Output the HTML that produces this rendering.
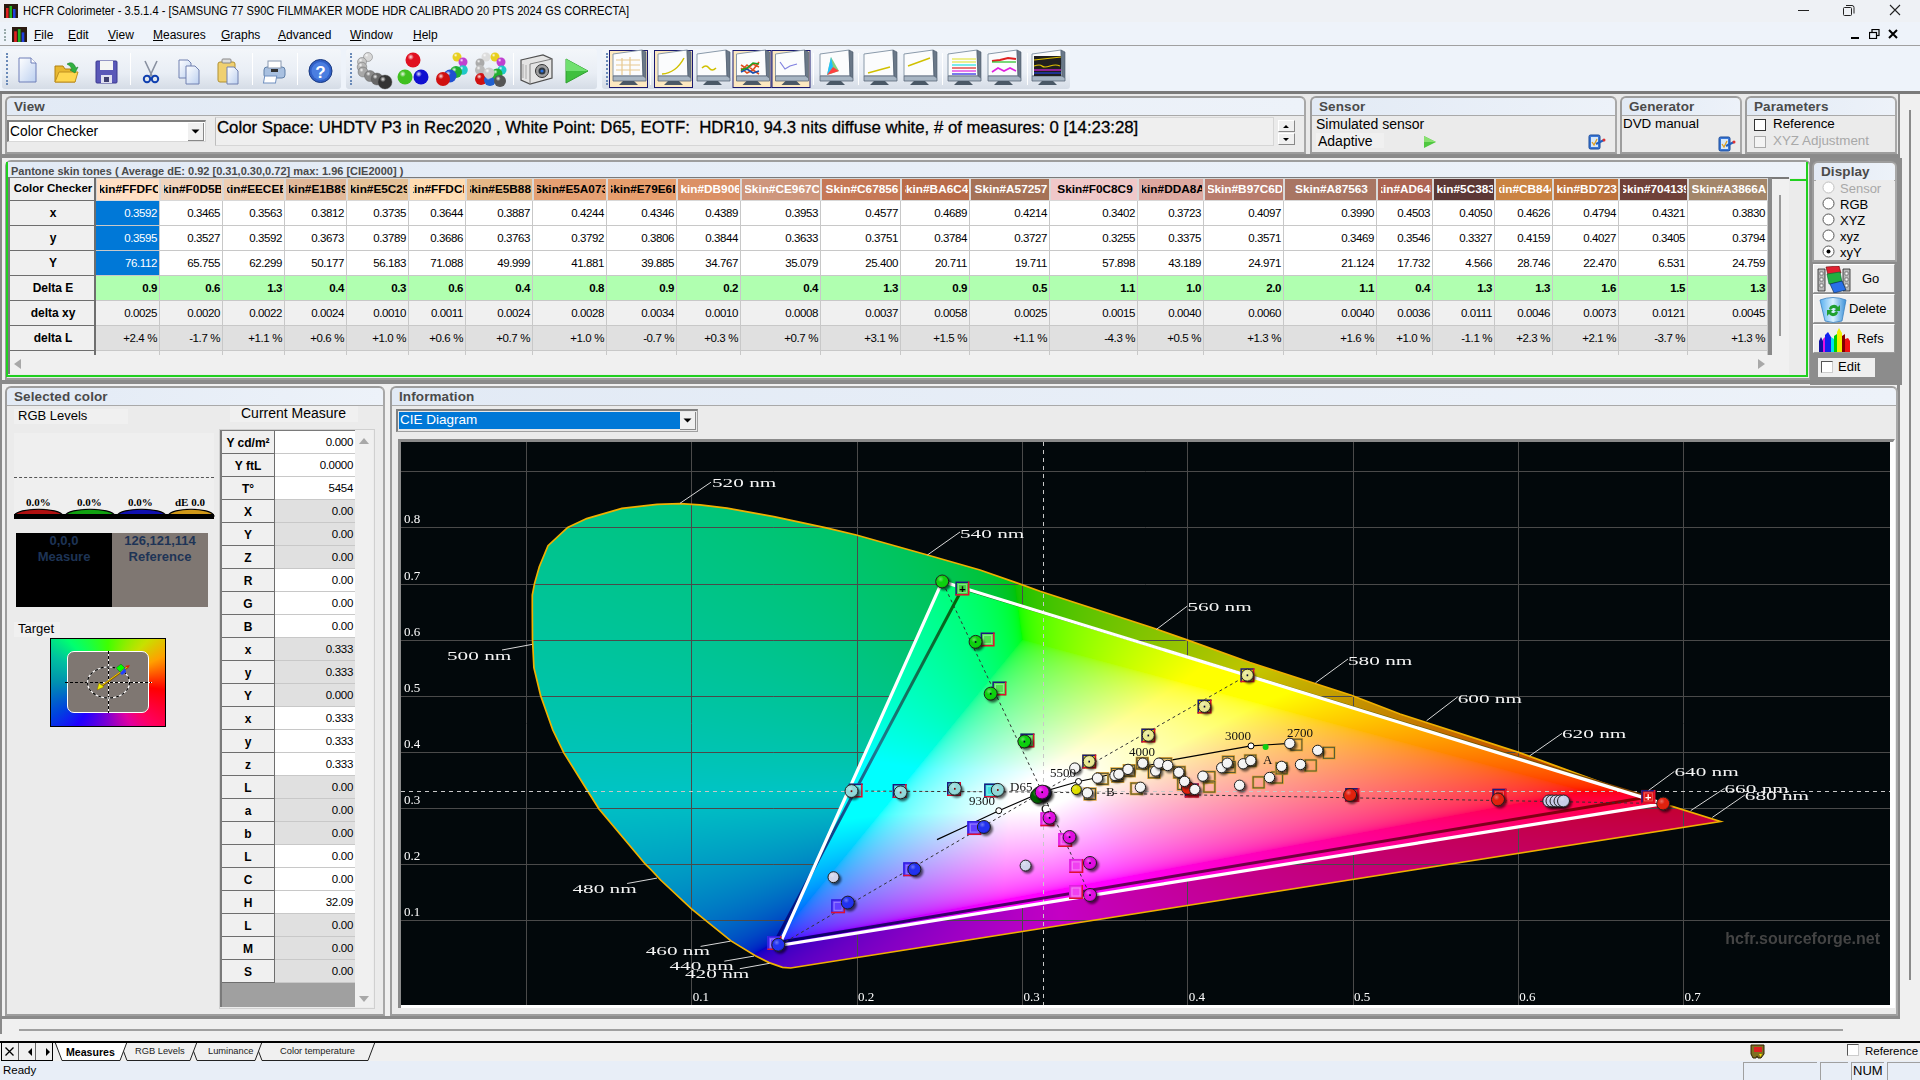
<!DOCTYPE html>
<html><head><meta charset="utf-8"><title>HCFR</title>
<style>
*{box-sizing:border-box;margin:0;padding:0}
html,body{width:1920px;height:1080px;overflow:hidden;background:#f0f0f0;font-family:"Liberation Sans",sans-serif;font-size:12px;color:#000}
.a{position:absolute}
.hdr{position:absolute;background:#e6edf6;border-bottom:1px solid #a0a0a0;font-weight:bold;color:#444;font-size:12px;padding-left:6px;line-height:17px}
.pnl{position:absolute;border:2px solid #9a9a9a;background:#ebebeb}
.t{position:absolute;white-space:nowrap}
</style></head><body>

<div class="a" style="left:0;top:0;width:1920px;height:22px;background:#eef1f5"></div>
<svg class="a" style="left:4px;top:4px" width="14" height="14" viewBox="0 0 14 14"><rect width="14" height="14" fill="#2a1a10"/><rect x="2" y="4" width="2.5" height="10" fill="#e02020"/><rect x="5.5" y="2" width="2.5" height="12" fill="#20b020"/><rect x="9" y="5" width="2.5" height="9" fill="#2040e0"/></svg>
<div class="t" style="left:23px;top:4px;font-size:12px;color:#000;transform:scaleX(0.9286);transform-origin:0 0">HCFR Colorimeter - 3.5.1.4 - [SAMSUNG 77 S90C FILMMAKER MODE HDR CALIBRADO 20 PTS 2024 GS CORRECTA]</div>
<div class="a" style="left:1798px;top:10px;width:11px;height:1px;background:#222"></div>
<svg class="a" style="left:1843px;top:4px" width="12" height="12"><rect x="0.5" y="3.5" width="8" height="8" rx="1" fill="none" stroke="#222"/><path d="M3 1.5 h6 a2 2 0 0 1 2 2 v6" fill="none" stroke="#222"/></svg>
<svg class="a" style="left:1889px;top:4px" width="12" height="12"><path d="M1 1 L11 11 M11 1 L1 11" stroke="#222" stroke-width="1.1"/></svg>
<div class="a" style="left:0;top:22px;width:1920px;height:23px;background:#eef3fa"></div>
<div class="a" style="left:0;top:45px;width:1920px;height:1px;background:#a0a0a0"></div>
<div class="a" style="left:4px;top:29px;width:2px;height:12px;border-left:2px dotted #9aa"></div>
<svg class="a" style="left:12px;top:27px" width="15" height="15" viewBox="0 0 14 14"><rect width="14" height="14" fill="#2a1a10"/><rect x="2" y="4" width="2.5" height="10" fill="#e02020"/><rect x="5.5" y="2" width="2.5" height="12" fill="#20b020"/><rect x="9" y="5" width="2.5" height="9" fill="#2040e0"/></svg>
<div class="t" style="left:34px;top:28px;font-size:12px"><u>F</u>ile</div>
<div class="t" style="left:68px;top:28px;font-size:12px"><u>E</u>dit</div>
<div class="t" style="left:108px;top:28px;font-size:12px"><u>V</u>iew</div>
<div class="t" style="left:153px;top:28px;font-size:12px"><u>M</u>easures</div>
<div class="t" style="left:221px;top:28px;font-size:12px"><u>G</u>raphs</div>
<div class="t" style="left:278px;top:28px;font-size:12px"><u>A</u>dvanced</div>
<div class="t" style="left:350px;top:28px;font-size:12px"><u>W</u>indow</div>
<div class="t" style="left:413px;top:28px;font-size:12px"><u>H</u>elp</div>
<div class="a" style="left:1851px;top:37px;width:8px;height:2px;background:#000"></div>
<svg class="a" style="left:1869px;top:29px" width="11" height="10"><rect x="3" y="0.5" width="7" height="6" fill="none" stroke="#000" stroke-width="1.2"/><rect x="0.5" y="3.5" width="7" height="6" fill="#eef3fa" stroke="#000" stroke-width="1.2"/></svg>
<svg class="a" style="left:1888px;top:29px" width="10" height="10"><path d="M1 1 L9 9 M9 1 L1 9" stroke="#000" stroke-width="2"/></svg>
<div class="a" style="left:0;top:46px;width:1920px;height:45px;background:#eef3fa"></div>
<div class="a" style="left:2px;top:49px;width:339px;height:40px;border-radius:3px;background:linear-gradient(#f3f6fa,#e9eef5 60%,#d5dce6)"></div>
<div class="a" style="left:6px;top:53px;width:2px;height:32px;border-left:2px dotted #6a8ab8"></div>
<div class="a" style="left:346px;top:49px;width:251px;height:40px;border-radius:3px;background:linear-gradient(#f3f6fa,#e9eef5 60%,#d5dce6)"></div>
<div class="a" style="left:350px;top:53px;width:2px;height:32px;border-left:2px dotted #6a8ab8"></div>
<div class="a" style="left:602px;top:49px;width:468px;height:40px;border-radius:3px;background:linear-gradient(#f3f6fa,#e9eef5 60%,#d5dce6)"></div>
<div class="a" style="left:606px;top:53px;width:2px;height:32px;border-left:2px dotted #6a8ab8"></div>
<div class="a" style="left:130px;top:53px;width:1px;height:32px;background:#c8ced8;border-right:1px solid #fff"></div>
<div class="a" style="left:252px;top:53px;width:1px;height:32px;background:#c8ced8;border-right:1px solid #fff"></div>
<div class="a" style="left:297px;top:53px;width:1px;height:32px;background:#c8ced8;border-right:1px solid #fff"></div>
<div class="a" style="left:513px;top:53px;width:1px;height:32px;background:#c8ced8;border-right:1px solid #fff"></div>
<div class="a" style="left:650px;top:53px;width:1px;height:32px;background:#c8ced8;border-right:1px solid #fff"></div>
<div class="a" style="left:813px;top:53px;width:1px;height:32px;background:#c8ced8;border-right:1px solid #fff"></div>
<div class="a" style="left:858px;top:53px;width:1px;height:32px;background:#c8ced8;border-right:1px solid #fff"></div>
<div class="a" style="left:942px;top:53px;width:1px;height:32px;background:#c8ced8;border-right:1px solid #fff"></div>
<div class="a" style="left:1027px;top:53px;width:1px;height:32px;background:#c8ced8;border-right:1px solid #fff"></div>
<div class="a" style="left:0;top:91px;width:1920px;height:3px;background:#7a7a7a"></div>
<svg class="a" style="left:0;top:46px" width="1100" height="46"><defs><linearGradient id="pg" x1="0" y1="0" x2="1" y2="1"><stop offset="0" stop-color="#fff"/><stop offset="1" stop-color="#bcd0f0"/></linearGradient><radialGradient id="ball" cx="0.35" cy="0.3" r="0.7"><stop offset="0" stop-color="#fff" stop-opacity="0.9"/><stop offset="0.3" stop-color="#fff" stop-opacity="0"/></radialGradient><linearGradient id="mon" x1="0" y1="0" x2="0" y2="1"><stop offset="0" stop-color="#dfe6ee"/><stop offset="1" stop-color="#6f8296"/></linearGradient></defs>
<path d="M19 12 h12 l5 5 v19 h-17 z" fill="url(#pg)" stroke="#6f7fb8" stroke-width="1"/><path d="M31 12 v5 h5" fill="#fff" stroke="#6f7fb8"/>
<path d="M55 20 h8 l2 3 h10 v13 h-20 z" fill="#e8b830" stroke="#b08010"/><path d="M55 36 l4 -10 h19 l-3 10 z" fill="#ffd850" stroke="#c09020"/><path d="M67 18 q6 -4 9 4 l2 -1 -3 6 -5 -3 2 -1 q-2 -4 -5 -5z" fill="#30b040" stroke="#208030" stroke-width="0.6"/>
<rect x="96" y="15" width="21" height="22" rx="1" fill="#5a58b8" stroke="#3a3890"/><rect x="100" y="15" width="13" height="9" fill="#f4f4f4"/><rect x="101" y="29" width="11" height="8" fill="#e0e0f0"/><rect x="104" y="31" width="5" height="5" fill="#404070"/>
<path d="M145 15 L153 32 M157 15 L149 32" stroke="#8890a0" stroke-width="1.6"/><circle cx="147" cy="33" r="3.2" fill="none" stroke="#1040b0" stroke-width="2"/><circle cx="155" cy="33" r="3.2" fill="none" stroke="#1040b0" stroke-width="2"/>
<path d="M179 14 h9 l3 3 v15 h-12 z" fill="url(#pg)" stroke="#7080b0"/><path d="M186 20 h9 l4 4 v14 h-13 z" fill="url(#pg)" stroke="#7080b0"/>
<rect x="218" y="16" width="17" height="20" rx="2" fill="#f0d070" stroke="#b09030"/><rect x="222" y="13" width="9" height="4" rx="1" fill="#ddd" stroke="#888"/><path d="M227 21 h7 l4 4 v13 h-11 z" fill="url(#pg)" stroke="#7080b0"/>
<rect x="264" y="21" width="21" height="11" rx="3" fill="#a8c0e0" stroke="#6080a8"/><rect x="268" y="15" width="13" height="7" fill="#fff" stroke="#8898b0"/><rect x="270" y="30" width="12" height="7" fill="#fff" stroke="#7090c0" transform="skewX(-10)"/><rect x="271" y="23" width="7" height="3" fill="#333"/>
<circle cx="320.5" cy="25" r="11.5" fill="#3060c8" stroke="#1a3a80"/><circle cx="320.5" cy="25" r="9" fill="#4a7ee0"/><text x="320.5" y="31.5" font-size="17" font-weight="bold" fill="#fff" text-anchor="middle" font-family="Liberation Sans">?</text>
<circle cx="368" cy="11" r="4.5" fill="#d8d8d8" stroke="#555" stroke-width="0.4"/><circle cx="368" cy="11" r="4.5" fill="url(#ball)"/>
<circle cx="362" cy="16" r="4.5" fill="#c8c8c8" stroke="#555" stroke-width="0.4"/><circle cx="362" cy="16" r="4.5" fill="url(#ball)"/>
<circle cx="362" cy="21" r="4.8" fill="#b8b8b8" stroke="#555" stroke-width="0.4"/><circle cx="362" cy="21" r="4.8" fill="url(#ball)"/>
<circle cx="363" cy="26" r="5" fill="#a8a8a8" stroke="#555" stroke-width="0.4"/><circle cx="363" cy="26" r="5" fill="url(#ball)"/>
<circle cx="370" cy="30" r="5.5" fill="#888" stroke="#555" stroke-width="0.4"/><circle cx="370" cy="30" r="5.5" fill="url(#ball)"/>
<circle cx="377" cy="33" r="6" fill="#666" stroke="#555" stroke-width="0.4"/><circle cx="377" cy="33" r="6" fill="url(#ball)"/>
<circle cx="385" cy="36" r="7" fill="#333" stroke="#555" stroke-width="0.4"/><circle cx="385" cy="36" r="7" fill="url(#ball)"/>
<circle cx="413" cy="14" r="7.5" fill="#e01020"/><circle cx="413" cy="14" r="7.5" fill="url(#ball)"/>
<circle cx="405" cy="31" r="7.5" fill="#40c020"/><circle cx="405" cy="31" r="7.5" fill="url(#ball)"/>
<circle cx="421" cy="31" r="7.5" fill="#1010d0"/><circle cx="421" cy="31" r="7.5" fill="url(#ball)"/>
<circle cx="457" cy="11" r="4.5" fill="#e8d020"/><circle cx="457" cy="11" r="4.5" fill="url(#ball)"/>
<circle cx="463" cy="16" r="4.5" fill="#c040d0"/><circle cx="463" cy="16" r="4.5" fill="url(#ball)"/>
<circle cx="463" cy="24" r="4.8" fill="#20c8c8"/><circle cx="463" cy="24" r="4.8" fill="url(#ball)"/>
<circle cx="456" cy="26" r="6" fill="#20b030"/><circle cx="456" cy="26" r="6" fill="url(#ball)"/>
<circle cx="450" cy="30" r="6.5" fill="#2050d0"/><circle cx="450" cy="30" r="6.5" fill="url(#ball)"/>
<circle cx="443" cy="33" r="7" fill="#d01010"/><circle cx="443" cy="33" r="7" fill="url(#ball)"/>
<circle cx="486" cy="11" r="4.5" fill="#ddd"/><circle cx="486" cy="11" r="4.5" fill="url(#ball)"/>
<circle cx="495" cy="11" r="4.5" fill="#e8d020"/><circle cx="495" cy="11" r="4.5" fill="url(#ball)"/>
<circle cx="501" cy="16" r="4.5" fill="#c040d0"/><circle cx="501" cy="16" r="4.5" fill="url(#ball)"/>
<circle cx="502" cy="24" r="4.5" fill="#20c8c8"/><circle cx="502" cy="24" r="4.5" fill="url(#ball)"/>
<circle cx="480" cy="17" r="4.5" fill="#aaa"/><circle cx="480" cy="17" r="4.5" fill="url(#ball)"/>
<circle cx="480" cy="24" r="5" fill="#bbb"/><circle cx="480" cy="24" r="5" fill="url(#ball)"/>
<circle cx="481" cy="33" r="6" fill="#d01010"/><circle cx="481" cy="33" r="6" fill="url(#ball)"/>
<circle cx="490" cy="34" r="6" fill="#2060d0"/><circle cx="490" cy="34" r="6" fill="url(#ball)"/>
<circle cx="497" cy="28" r="5.5" fill="#20b030"/><circle cx="497" cy="28" r="5.5" fill="url(#ball)"/>
<circle cx="500" cy="35" r="6" fill="#555"/><circle cx="500" cy="35" r="6" fill="url(#ball)"/>
<circle cx="489" cy="27" r="5.5" fill="#ccc"/><circle cx="489" cy="27" r="5.5" fill="url(#ball)"/>
<path d="M521 14 l22 -5 l9 4 v19 l-22 6 l-9 -4 z" fill="#e4e4e4" stroke="#505050" stroke-width="1.2"/><path d="M530 18 l22 -5 M530 18 v20" stroke="#808080" fill="none"/><path d="M523 18 v14 M526 19 v14" stroke="#aaa"/><circle cx="542" cy="25" r="6.5" fill="#a0a0a0" stroke="#333"/><circle cx="542" cy="25" r="3.5" fill="#303840"/><circle cx="542" cy="25" r="1.6" fill="#2a70e0"/>
<path d="M566 13 L588 25 L566 37 z" fill="#40c040" stroke="#30a030"/><path d="M566 13 L588 25 L566 25z" fill="#70e070"/>
<rect x="609.5" y="4.5" width="38" height="37" fill="#fce8c0" stroke="#1a1a70"/><path d="M613 8 L642 4 L643 30 L613 30 z" fill="#fbfcfd" stroke="#8a9aaa" stroke-width="1"/><path d="M642 4 l4 2 v26 l-3 -2z" fill="#6a7888" stroke="#4a5868" stroke-width="0.6"/><path d="M613 30 h30 l3 2 v3 h-33z" fill="#a8b6c4" stroke="#5a6878" stroke-width="0.8"/><path d="M623 35 h11 l4 4 h-19z" fill="#4a5866"/><path d="M616 14 h24 M616 19 h24 M616 24 h24 M622 12 v17 M630 11 v18" stroke="#e8c890" stroke-width="1.2"/>
<rect x="654.5" y="4.5" width="38" height="37" fill="#fce8c0" stroke="#1a1a70"/><path d="M658 8 L687 4 L688 30 L658 30 z" fill="#fbfcfd" stroke="#8a9aaa" stroke-width="1"/><path d="M687 4 l4 2 v26 l-3 -2z" fill="#6a7888" stroke="#4a5868" stroke-width="0.6"/><path d="M658 30 h30 l3 2 v3 h-33z" fill="#a8b6c4" stroke="#5a6878" stroke-width="0.8"/><path d="M668 35 h11 l4 4 h-19z" fill="#4a5866"/><path d="M662 28 Q676 27 684 12" fill="none" stroke="#d0c000" stroke-width="1.5"/>
<path d="M697 8 L726 4 L727 30 L697 30 z" fill="#fbfcfd" stroke="#8a9aaa" stroke-width="1"/><path d="M726 4 l4 2 v26 l-3 -2z" fill="#6a7888" stroke="#4a5868" stroke-width="0.6"/><path d="M697 30 h30 l3 2 v3 h-33z" fill="#a8b6c4" stroke="#5a6878" stroke-width="0.8"/><path d="M707 35 h11 l4 4 h-19z" fill="#4a5866"/><path d="M702 22 q4 -4 7 0 t7 0" fill="none" stroke="#d0c000" stroke-width="1.5"/>
<rect x="733.0" y="4.5" width="38" height="37" fill="#fce8c0" stroke="#1a1a70"/><path d="M736.5 8 L765.5 4 L766.5 30 L736.5 30 z" fill="#fbfcfd" stroke="#8a9aaa" stroke-width="1"/><path d="M765.5 4 l4 2 v26 l-3 -2z" fill="#6a7888" stroke="#4a5868" stroke-width="0.6"/><path d="M736.5 30 h30 l3 2 v3 h-33z" fill="#a8b6c4" stroke="#5a6878" stroke-width="0.8"/><path d="M746.5 35 h11 l4 4 h-19z" fill="#4a5866"/><path d="M741 25 l6 -6 6 5 6 -8 M741 19 l6 4 6 -5 6 3 M741 22 l6 5 6 -3 6 4" fill="none" stroke-width="1.6" stroke="#e05020"/><path d="M741 26 l6 -3 6 4 6 -2" fill="none" stroke="#1a50b0" stroke-width="1.6"/><path d="M741 24 l6 -2 6 -5 6 1" fill="none" stroke="#20a020" stroke-width="1.6"/>
<rect x="772.0" y="4.5" width="38" height="37" fill="#fce8c0" stroke="#1a1a70"/><path d="M775.5 8 L804.5 4 L805.5 30 L775.5 30 z" fill="#fbfcfd" stroke="#8a9aaa" stroke-width="1"/><path d="M804.5 4 l4 2 v26 l-3 -2z" fill="#6a7888" stroke="#4a5868" stroke-width="0.6"/><path d="M775.5 30 h30 l3 2 v3 h-33z" fill="#a8b6c4" stroke="#5a6878" stroke-width="0.8"/><path d="M785.5 35 h11 l4 4 h-19z" fill="#4a5866"/><path d="M780 16 l5 7 5 -3 7 -2" fill="none" stroke="#8080e0" stroke-width="1.2"/>
<path d="M820 8 L849 4 L850 30 L820 30 z" fill="#fbfcfd" stroke="#8a9aaa" stroke-width="1"/><path d="M849 4 l4 2 v26 l-3 -2z" fill="#6a7888" stroke="#4a5868" stroke-width="0.6"/><path d="M820 30 h30 l3 2 v3 h-33z" fill="#a8b6c4" stroke="#5a6878" stroke-width="0.8"/><path d="M830 35 h11 l4 4 h-19z" fill="#4a5866"/><path d="M831 11 l-4 18 l12 -4 z" fill="#80d080"/><path d="M831 11 l-4 18 l6 -8z" fill="#20c0ff"/><path d="M833 21 l6 4 -12 4z" fill="#ff4040"/>
<path d="M864 8 L893 4 L894 30 L864 30 z" fill="#fbfcfd" stroke="#8a9aaa" stroke-width="1"/><path d="M893 4 l4 2 v26 l-3 -2z" fill="#6a7888" stroke="#4a5868" stroke-width="0.6"/><path d="M864 30 h30 l3 2 v3 h-33z" fill="#a8b6c4" stroke="#5a6878" stroke-width="0.8"/><path d="M874 35 h11 l4 4 h-19z" fill="#4a5866"/><path d="M868 27 l22 -6" stroke="#d0c000" stroke-width="1.5"/>
<path d="M904 8 L933 4 L934 30 L904 30 z" fill="#fbfcfd" stroke="#8a9aaa" stroke-width="1"/><path d="M933 4 l4 2 v26 l-3 -2z" fill="#6a7888" stroke="#4a5868" stroke-width="0.6"/><path d="M904 30 h30 l3 2 v3 h-33z" fill="#a8b6c4" stroke="#5a6878" stroke-width="0.8"/><path d="M914 35 h11 l4 4 h-19z" fill="#4a5866"/><path d="M908 20 l22 -8" stroke="#d0c000" stroke-width="1.5"/>
<path d="M948 8 L977 4 L978 30 L948 30 z" fill="#fbfcfd" stroke="#8a9aaa" stroke-width="1"/><path d="M977 4 l4 2 v26 l-3 -2z" fill="#6a7888" stroke="#4a5868" stroke-width="0.6"/><path d="M948 30 h30 l3 2 v3 h-33z" fill="#a8b6c4" stroke="#5a6878" stroke-width="0.8"/><path d="M958 35 h11 l4 4 h-19z" fill="#4a5866"/><path d="M952 13 h24 M952 16 h24" stroke="#e0e020" stroke-width="1.2"/><path d="M952 19 h24" stroke="#20e0e0" stroke-width="1.2"/><path d="M952 22 h24" stroke="#e02020" stroke-width="1.2"/><path d="M952 25 h24" stroke="#e020e0" stroke-width="1.2"/><path d="M952 28 h24" stroke="#2020e0" stroke-width="1.2"/>
<path d="M988 8 L1017 4 L1018 30 L988 30 z" fill="#fbfcfd" stroke="#8a9aaa" stroke-width="1"/><path d="M1017 4 l4 2 v26 l-3 -2z" fill="#6a7888" stroke="#4a5868" stroke-width="0.6"/><path d="M988 30 h30 l3 2 v3 h-33z" fill="#a8b6c4" stroke="#5a6878" stroke-width="0.8"/><path d="M998 35 h11 l4 4 h-19z" fill="#4a5866"/><path d="M992 15 l8 -1 l8 -2 l8 1" fill="none" stroke="#e02020" stroke-width="2"/><path d="M992 16 h24" stroke="#20c020" stroke-width="1.2"/><path d="M992 26 l6 -4 6 3 6 -3 6 3" fill="none" stroke="#e020e0" stroke-width="1.6"/>
<path d="M1032 8 L1061 4 L1062 30 L1032 30 z" fill="#fbfcfd" stroke="#8a9aaa" stroke-width="1"/><path d="M1061 4 l4 2 v26 l-3 -2z" fill="#6a7888" stroke="#4a5868" stroke-width="0.6"/><path d="M1032 30 h30 l3 2 v3 h-33z" fill="#a8b6c4" stroke="#5a6878" stroke-width="0.8"/><path d="M1042 35 h11 l4 4 h-19z" fill="#4a5866"/><rect x="1034" y="10" width="27" height="20" fill="#202020"/><path d="M1034 14 l27 -3 M1034 20 q6 -2 8 0 t8 0 t10 0" fill="none" stroke="#e0c000" stroke-width="1.2"/><path d="M1034 24 h27" stroke="#e020e0" stroke-width="1.2"/><path d="M1034 27 h27" stroke="#2040e0" stroke-width="1.2"/>
</svg>
<div class="a" style="left:0;top:94px;width:1920px;height:948px;background:#f0f0f0"></div>
<div class="a" style="left:0;top:94px;width:2px;height:940px;background:#8a8a8a"></div>
<div class="a" style="left:2px;top:94px;width:1898px;height:62px;background:#e9e9e9;border:2px solid #8c8c8c;border-left:none;border-top:none"></div>
<div class="a" style="left:5px;top:96px;width:1301px;height:58px;background:#ebebeb;border:2px solid #9d9d9d;border-top-left-radius:6px;border-top-right-radius:6px;border-right-color:#a8a8a8"></div><div class="a" style="left:7px;top:98px;width:1297px;height:18px;background:linear-gradient(90deg,#e2eaf5,#edf2f9);border-bottom:1px solid #a9a9a9;border-top-left-radius:5px;border-top-right-radius:5px"></div><div class="t" style="left:14px;top:99px;font-weight:bold;color:#4a4a4a;font-size:13.5px;letter-spacing:0.1px">View</div>
<div class="a" style="left:7px;top:120px;width:199px;height:22px;background:#fff;border-top:2px solid #808080;border-left:2px solid #808080;border-right:1px solid #d8d8d8;border-bottom:1px solid #d8d8d8"></div>
<div class="t" style="left:10px;top:124px;font-size:13.8px">Color Checker</div>
<div class="a" style="left:188px;top:123px;width:16px;height:18px;background:#f0f0f0;border-right:1px solid #888;border-bottom:1px solid #888"></div>
<svg class="a" style="left:191px;top:129px" width="10" height="6"><path d="M0.5 0.5 h8 l-4 4z" fill="#000"/></svg>
<div class="a" style="left:215px;top:117px;width:1059px;height:29px;background:#efefef;border:1px solid #d6d6d6;border-left-color:#bdbdbd"></div>
<div class="t" style="left:217px;top:118px;font-size:16.8px;-webkit-text-stroke:0.3px #000">Color Space: UHDTV P3 in Rec2020 , White Point: D65, EOTF:&nbsp; HDR10, 94.3 nits diffuse white, # of measures: 0 [14:23:28]</div>
<div class="a" style="left:1278px;top:120px;width:17px;height:12px;background:#f0f0f0;border-right:1px solid #888;border-bottom:1px solid #888;border-left:1px solid #fff;border-top:1px solid #fff"></div>
<div class="a" style="left:1278px;top:133px;width:17px;height:12px;background:#f0f0f0;border-right:1px solid #888;border-bottom:1px solid #888;border-left:1px solid #fff;border-top:1px solid #fff"></div>
<svg class="a" style="left:1282px;top:123px" width="9" height="22"><path d="M1 5 h6 l-3 -3z M1 15 h6 l-3 3z" fill="#000"/></svg>
<div class="a" style="left:1310px;top:96px;width:307px;height:58px;background:#ebebeb;border:2px solid #9d9d9d;border-top-left-radius:6px;border-top-right-radius:6px;border-right-color:#a8a8a8"></div><div class="a" style="left:1312px;top:98px;width:303px;height:18px;background:linear-gradient(90deg,#e2eaf5,#edf2f9);border-bottom:1px solid #a9a9a9;border-top-left-radius:5px;border-top-right-radius:5px"></div><div class="t" style="left:1319px;top:99px;font-weight:bold;color:#4a4a4a;font-size:13.5px;letter-spacing:0.1px">Sensor</div>
<div class="t" style="left:1316px;top:116px;font-size:14px">Simulated sensor</div>
<div class="a" style="left:1316px;top:133px;width:68px;height:15px;background:#f0f0f0"></div>
<div class="t" style="left:1318px;top:133px;font-size:14px">Adaptive</div>
<svg class="a" style="left:1423px;top:135px" width="14" height="14"><path d="M1 1 L13 7 L1 13z" fill="#50c840"/><path d="M1 1 L13 7 L1 7z" fill="#88e070"/></svg>
<svg class="a" style="left:1588px;top:132px" width="18" height="18"><rect x="1" y="3" width="11" height="14" rx="1.5" fill="#3a78d8" stroke="#1a4a98"/><rect x="3" y="5" width="7" height="10" fill="#d8e8f8"/><path d="M4 10 l2 3 l3 -6" fill="none" stroke="#e0a020" stroke-width="1.3"/><path d="M8 12 l8 -4" stroke="#2060c0" stroke-width="2"/><circle cx="16" cy="8" r="1.5" fill="#e03030"/></svg>
<div class="a" style="left:1620px;top:96px;width:122px;height:58px;background:#ebebeb;border:2px solid #9d9d9d;border-top-left-radius:6px;border-top-right-radius:6px;border-right-color:#a8a8a8"></div><div class="a" style="left:1622px;top:98px;width:118px;height:18px;background:linear-gradient(90deg,#e2eaf5,#edf2f9);border-bottom:1px solid #a9a9a9;border-top-left-radius:5px;border-top-right-radius:5px"></div><div class="t" style="left:1629px;top:99px;font-weight:bold;color:#4a4a4a;font-size:13.5px;letter-spacing:0.1px">Generator</div>
<div class="t" style="left:1623px;top:116px;font-size:13.4px">DVD manual</div>
<svg class="a" style="left:1718px;top:134px" width="18" height="18"><rect x="1" y="3" width="11" height="14" rx="1.5" fill="#3a78d8" stroke="#1a4a98"/><rect x="3" y="5" width="7" height="10" fill="#d8e8f8"/><path d="M4 10 l2 3 l3 -6" fill="none" stroke="#e0a020" stroke-width="1.3"/><path d="M8 12 l8 -4" stroke="#2060c0" stroke-width="2"/><circle cx="16" cy="8" r="1.5" fill="#e03030"/></svg>
<div class="a" style="left:1745px;top:96px;width:152px;height:58px;background:#ebebeb;border:2px solid #9d9d9d;border-top-left-radius:6px;border-top-right-radius:6px;border-right-color:#a8a8a8"></div><div class="a" style="left:1747px;top:98px;width:148px;height:18px;background:linear-gradient(90deg,#e2eaf5,#edf2f9);border-bottom:1px solid #a9a9a9;border-top-left-radius:5px;border-top-right-radius:5px"></div><div class="t" style="left:1754px;top:99px;font-weight:bold;color:#4a4a4a;font-size:13.5px;letter-spacing:0.1px">Parameters</div>
<div class="a" style="left:1754px;top:119px;width:12px;height:12px;background:#fff;border:1px solid #333"></div>
<div class="t" style="left:1773px;top:116px;font-size:13.4px">Reference</div>
<div class="a" style="left:1754px;top:136px;width:12px;height:12px;background:#f4f4f4;border:1px solid #aaa"></div>
<div class="t" style="left:1773px;top:133px;font-size:13.4px;color:#a8a8a8">XYZ Adjustment</div>
<div class="a" style="left:1909px;top:110px;width:2px;height:870px;background:#8a8a8a"></div>
<div class="a" style="left:2px;top:155px;width:1898px;height:3px;background:#8a8a8a"></div>
<div class="a" style="left:5px;top:160px;width:1806px;height:220px;background:#ebebeb;border:2px solid #9d9d9d;border-radius:6px 6px 0 0"></div>
<div class="a" style="left:6px;top:162px;width:1802px;height:215px;border:2px solid #20d020;border-top:none;border-radius:0"></div>
<div class="a" style="left:8px;top:162px;width:1798px;height:16px;background:linear-gradient(90deg,#e2eaf5,#edf2f9)"></div>
<div class="t" style="left:11px;top:165px;font-weight:bold;color:#4a4a4a;font-size:11px">Pantone skin tones ( Average dE: 0.92 [0.31,0.30,0.72] max: 1.96 [CIE2000] )</div>
<div class="a" style="left:8px;top:177px;width:1781px;height:197px;background:#f0f0f0;border-left:2px solid #7a7a7a;border-top:2px solid #7a7a7a"></div>
<div class="a" style="left:10px;top:178px;width:86px;height:23px;background:#f0f0f0;border-right:2px solid #6e6e6e;border-bottom:1px solid #6e6e6e"></div>
<div class="t" style="left:10px;top:182px;width:86px;text-align:center;font-weight:bold;font-size:11.5px">Color Checker</div>
<div class="a" style="left:96px;top:178px;width:64px;height:23px;background:#d8d8d8"></div>
<div class="a" style="left:97px;top:179px;width:62px;height:21px;background:#FFDFC4;overflow:hidden"><div style="position:absolute;left:3px;right:1px;top:0;bottom:0;overflow:hidden"><div style="position:absolute;left:-40px;right:-40px;top:3px;text-align:center;font-weight:bold;font-size:11.8px;color:#000;white-space:nowrap">Skin#FFDFC4</div></div></div>
<div class="a" style="left:160px;top:178px;width:63px;height:23px;background:#d8d8d8"></div>
<div class="a" style="left:161px;top:179px;width:61px;height:21px;background:#F0D5BE;overflow:hidden"><div style="position:absolute;left:3px;right:1px;top:0;bottom:0;overflow:hidden"><div style="position:absolute;left:-40px;right:-40px;top:3px;text-align:center;font-weight:bold;font-size:11.8px;color:#000;white-space:nowrap">Skin#F0D5BE</div></div></div>
<div class="a" style="left:223px;top:178px;width:62px;height:23px;background:#d8d8d8"></div>
<div class="a" style="left:224px;top:179px;width:60px;height:21px;background:#EECEB3;overflow:hidden"><div style="position:absolute;left:3px;right:1px;top:0;bottom:0;overflow:hidden"><div style="position:absolute;left:-40px;right:-40px;top:3px;text-align:center;font-weight:bold;font-size:11.8px;color:#000;white-space:nowrap">Skin#EECEB3</div></div></div>
<div class="a" style="left:285px;top:178px;width:62px;height:23px;background:#d8d8d8"></div>
<div class="a" style="left:286px;top:179px;width:60px;height:21px;background:#E1B899;overflow:hidden"><div style="position:absolute;left:3px;right:1px;top:0;bottom:0;overflow:hidden"><div style="position:absolute;left:-40px;right:-40px;top:3px;text-align:center;font-weight:bold;font-size:11.8px;color:#000;white-space:nowrap">Skin#E1B899</div></div></div>
<div class="a" style="left:347px;top:178px;width:62px;height:23px;background:#d8d8d8"></div>
<div class="a" style="left:348px;top:179px;width:60px;height:21px;background:#E5C298;overflow:hidden"><div style="position:absolute;left:3px;right:1px;top:0;bottom:0;overflow:hidden"><div style="position:absolute;left:-40px;right:-40px;top:3px;text-align:center;font-weight:bold;font-size:11.8px;color:#000;white-space:nowrap">Skin#E5C298</div></div></div>
<div class="a" style="left:409px;top:178px;width:57px;height:23px;background:#d8d8d8"></div>
<div class="a" style="left:410px;top:179px;width:55px;height:21px;background:#FFDCB2;overflow:hidden"><div style="position:absolute;left:3px;right:1px;top:0;bottom:0;overflow:hidden"><div style="position:absolute;left:-40px;right:-40px;top:3px;text-align:center;font-weight:bold;font-size:11.8px;color:#000;white-space:nowrap">Skin#FFDCB2</div></div></div>
<div class="a" style="left:466px;top:178px;width:67px;height:23px;background:#d8d8d8"></div>
<div class="a" style="left:467px;top:179px;width:65px;height:21px;background:#E5B887;overflow:hidden"><div style="position:absolute;left:3px;right:1px;top:0;bottom:0;overflow:hidden"><div style="position:absolute;left:-40px;right:-40px;top:3px;text-align:center;font-weight:bold;font-size:11.8px;color:#000;white-space:nowrap">Skin#E5B887</div></div></div>
<div class="a" style="left:533px;top:178px;width:74px;height:23px;background:#d8d8d8"></div>
<div class="a" style="left:534px;top:179px;width:72px;height:21px;background:#E5A073;overflow:hidden"><div style="position:absolute;left:3px;right:1px;top:0;bottom:0;overflow:hidden"><div style="position:absolute;left:-40px;right:-40px;top:3px;text-align:center;font-weight:bold;font-size:11.8px;color:#000;white-space:nowrap">Skin#E5A073</div></div></div>
<div class="a" style="left:607px;top:178px;width:70px;height:23px;background:#d8d8d8"></div>
<div class="a" style="left:608px;top:179px;width:68px;height:21px;background:#E79E6D;overflow:hidden"><div style="position:absolute;left:3px;right:1px;top:0;bottom:0;overflow:hidden"><div style="position:absolute;left:-40px;right:-40px;top:3px;text-align:center;font-weight:bold;font-size:11.8px;color:#000;white-space:nowrap">Skin#E79E6D</div></div></div>
<div class="a" style="left:677px;top:178px;width:64px;height:23px;background:#d8d8d8"></div>
<div class="a" style="left:678px;top:179px;width:62px;height:21px;background:#DB9065;overflow:hidden"><div style="position:absolute;left:3px;right:1px;top:0;bottom:0;overflow:hidden"><div style="position:absolute;left:-40px;right:-40px;top:3px;text-align:center;font-weight:bold;font-size:11.8px;color:#fff;white-space:nowrap">Skin#DB9065</div></div></div>
<div class="a" style="left:741px;top:178px;width:80px;height:23px;background:#d8d8d8"></div>
<div class="a" style="left:742px;top:179px;width:78px;height:21px;background:#CE967C;overflow:hidden"><div style="position:absolute;left:3px;right:1px;top:0;bottom:0;overflow:hidden"><div style="position:absolute;left:-40px;right:-40px;top:3px;text-align:center;font-weight:bold;font-size:11.8px;color:#fff;white-space:nowrap">Skin#CE967C</div></div></div>
<div class="a" style="left:821px;top:178px;width:80px;height:23px;background:#d8d8d8"></div>
<div class="a" style="left:822px;top:179px;width:78px;height:21px;background:#C67856;overflow:hidden"><div style="position:absolute;left:3px;right:1px;top:0;bottom:0;overflow:hidden"><div style="position:absolute;left:-40px;right:-40px;top:3px;text-align:center;font-weight:bold;font-size:11.8px;color:#fff;white-space:nowrap">Skin#C67856</div></div></div>
<div class="a" style="left:901px;top:178px;width:69px;height:23px;background:#d8d8d8"></div>
<div class="a" style="left:902px;top:179px;width:67px;height:21px;background:#BA6C49;overflow:hidden"><div style="position:absolute;left:3px;right:1px;top:0;bottom:0;overflow:hidden"><div style="position:absolute;left:-40px;right:-40px;top:3px;text-align:center;font-weight:bold;font-size:11.8px;color:#fff;white-space:nowrap">Skin#BA6C49</div></div></div>
<div class="a" style="left:970px;top:178px;width:80px;height:23px;background:#d8d8d8"></div>
<div class="a" style="left:971px;top:179px;width:78px;height:21px;background:#A57257;overflow:hidden"><div style="position:absolute;left:3px;right:1px;top:0;bottom:0;overflow:hidden"><div style="position:absolute;left:-40px;right:-40px;top:3px;text-align:center;font-weight:bold;font-size:11.8px;color:#fff;white-space:nowrap">Skin#A57257</div></div></div>
<div class="a" style="left:1050px;top:178px;width:88px;height:23px;background:#d8d8d8"></div>
<div class="a" style="left:1051px;top:179px;width:86px;height:21px;background:#F0C8C9;overflow:hidden"><div style="position:absolute;left:3px;right:1px;top:0;bottom:0;overflow:hidden"><div style="position:absolute;left:-40px;right:-40px;top:3px;text-align:center;font-weight:bold;font-size:11.8px;color:#000;white-space:nowrap">Skin#F0C8C9</div></div></div>
<div class="a" style="left:1138px;top:178px;width:66px;height:23px;background:#d8d8d8"></div>
<div class="a" style="left:1139px;top:179px;width:64px;height:21px;background:#DDA8A0;overflow:hidden"><div style="position:absolute;left:3px;right:1px;top:0;bottom:0;overflow:hidden"><div style="position:absolute;left:-40px;right:-40px;top:3px;text-align:center;font-weight:bold;font-size:11.8px;color:#000;white-space:nowrap">Skin#DDA8A0</div></div></div>
<div class="a" style="left:1204px;top:178px;width:80px;height:23px;background:#d8d8d8"></div>
<div class="a" style="left:1205px;top:179px;width:78px;height:21px;background:#B97C6D;overflow:hidden"><div style="position:absolute;left:3px;right:1px;top:0;bottom:0;overflow:hidden"><div style="position:absolute;left:-40px;right:-40px;top:3px;text-align:center;font-weight:bold;font-size:11.8px;color:#fff;white-space:nowrap">Skin#B97C6D</div></div></div>
<div class="a" style="left:1284px;top:178px;width:93px;height:23px;background:#d8d8d8"></div>
<div class="a" style="left:1285px;top:179px;width:91px;height:21px;background:#A87563;overflow:hidden"><div style="position:absolute;left:3px;right:1px;top:0;bottom:0;overflow:hidden"><div style="position:absolute;left:-40px;right:-40px;top:3px;text-align:center;font-weight:bold;font-size:11.8px;color:#fff;white-space:nowrap">Skin#A87563</div></div></div>
<div class="a" style="left:1377px;top:178px;width:56px;height:23px;background:#d8d8d8"></div>
<div class="a" style="left:1378px;top:179px;width:54px;height:21px;background:#AD6452;overflow:hidden"><div style="position:absolute;left:3px;right:1px;top:0;bottom:0;overflow:hidden"><div style="position:absolute;left:-40px;right:-40px;top:3px;text-align:center;font-weight:bold;font-size:11.8px;color:#fff;white-space:nowrap">Skin#AD6452</div></div></div>
<div class="a" style="left:1433px;top:178px;width:62px;height:23px;background:#d8d8d8"></div>
<div class="a" style="left:1434px;top:179px;width:60px;height:21px;background:#5C3836;overflow:hidden"><div style="position:absolute;left:3px;right:1px;top:0;bottom:0;overflow:hidden"><div style="position:absolute;left:-40px;right:-40px;top:3px;text-align:center;font-weight:bold;font-size:11.8px;color:#fff;white-space:nowrap">Skin#5C3836</div></div></div>
<div class="a" style="left:1495px;top:178px;width:58px;height:23px;background:#d8d8d8"></div>
<div class="a" style="left:1496px;top:179px;width:56px;height:21px;background:#CB8442;overflow:hidden"><div style="position:absolute;left:3px;right:1px;top:0;bottom:0;overflow:hidden"><div style="position:absolute;left:-40px;right:-40px;top:3px;text-align:center;font-weight:bold;font-size:11.8px;color:#fff;white-space:nowrap">Skin#CB8442</div></div></div>
<div class="a" style="left:1553px;top:178px;width:66px;height:23px;background:#d8d8d8"></div>
<div class="a" style="left:1554px;top:179px;width:64px;height:21px;background:#BD723C;overflow:hidden"><div style="position:absolute;left:3px;right:1px;top:0;bottom:0;overflow:hidden"><div style="position:absolute;left:-40px;right:-40px;top:3px;text-align:center;font-weight:bold;font-size:11.8px;color:#fff;white-space:nowrap">Skin#BD723C</div></div></div>
<div class="a" style="left:1619px;top:178px;width:69px;height:23px;background:#d8d8d8"></div>
<div class="a" style="left:1620px;top:179px;width:67px;height:21px;background:#704139;overflow:hidden"><div style="position:absolute;left:3px;right:1px;top:0;bottom:0;overflow:hidden"><div style="position:absolute;left:-40px;right:-40px;top:3px;text-align:center;font-weight:bold;font-size:11.8px;color:#fff;white-space:nowrap">Skin#704139</div></div></div>
<div class="a" style="left:1688px;top:178px;width:80px;height:23px;background:#d8d8d8"></div>
<div class="a" style="left:1689px;top:179px;width:78px;height:21px;background:#A3866A;overflow:hidden"><div style="position:absolute;left:3px;right:1px;top:0;bottom:0;overflow:hidden"><div style="position:absolute;left:-40px;right:-40px;top:3px;text-align:center;font-weight:bold;font-size:11.8px;color:#fff;white-space:nowrap">Skin#A3866A</div></div></div>
<div class="a" style="left:10px;top:201px;width:86px;height:25px;background:#f0f0f0;border-right:2px solid #6e6e6e;border-bottom:1px solid #6e6e6e"></div>
<div class="t" style="left:10px;top:206px;width:86px;text-align:center;font-weight:bold;font-size:12px">x</div>
<div class="a" style="left:96px;top:201px;width:64px;height:25px;background:#0078d7;border-right:1px solid #c8c8c8;border-bottom:1px solid #c8c8c8"></div>
<div class="t" style="left:96px;top:207px;width:61px;text-align:right;font-size:11.5px;letter-spacing:-0.4px;color:#fff">0.3592</div>
<div class="a" style="left:160px;top:201px;width:63px;height:25px;background:#ffffff;border-right:1px solid #c8c8c8;border-bottom:1px solid #c8c8c8"></div>
<div class="t" style="left:160px;top:207px;width:60px;text-align:right;font-size:11.5px;letter-spacing:-0.4px;color:#000">0.3465</div>
<div class="a" style="left:223px;top:201px;width:62px;height:25px;background:#ffffff;border-right:1px solid #c8c8c8;border-bottom:1px solid #c8c8c8"></div>
<div class="t" style="left:223px;top:207px;width:59px;text-align:right;font-size:11.5px;letter-spacing:-0.4px;color:#000">0.3563</div>
<div class="a" style="left:285px;top:201px;width:62px;height:25px;background:#ffffff;border-right:1px solid #c8c8c8;border-bottom:1px solid #c8c8c8"></div>
<div class="t" style="left:285px;top:207px;width:59px;text-align:right;font-size:11.5px;letter-spacing:-0.4px;color:#000">0.3812</div>
<div class="a" style="left:347px;top:201px;width:62px;height:25px;background:#ffffff;border-right:1px solid #c8c8c8;border-bottom:1px solid #c8c8c8"></div>
<div class="t" style="left:347px;top:207px;width:59px;text-align:right;font-size:11.5px;letter-spacing:-0.4px;color:#000">0.3735</div>
<div class="a" style="left:409px;top:201px;width:57px;height:25px;background:#ffffff;border-right:1px solid #c8c8c8;border-bottom:1px solid #c8c8c8"></div>
<div class="t" style="left:409px;top:207px;width:54px;text-align:right;font-size:11.5px;letter-spacing:-0.4px;color:#000">0.3644</div>
<div class="a" style="left:466px;top:201px;width:67px;height:25px;background:#ffffff;border-right:1px solid #c8c8c8;border-bottom:1px solid #c8c8c8"></div>
<div class="t" style="left:466px;top:207px;width:64px;text-align:right;font-size:11.5px;letter-spacing:-0.4px;color:#000">0.3887</div>
<div class="a" style="left:533px;top:201px;width:74px;height:25px;background:#ffffff;border-right:1px solid #c8c8c8;border-bottom:1px solid #c8c8c8"></div>
<div class="t" style="left:533px;top:207px;width:71px;text-align:right;font-size:11.5px;letter-spacing:-0.4px;color:#000">0.4244</div>
<div class="a" style="left:607px;top:201px;width:70px;height:25px;background:#ffffff;border-right:1px solid #c8c8c8;border-bottom:1px solid #c8c8c8"></div>
<div class="t" style="left:607px;top:207px;width:67px;text-align:right;font-size:11.5px;letter-spacing:-0.4px;color:#000">0.4346</div>
<div class="a" style="left:677px;top:201px;width:64px;height:25px;background:#ffffff;border-right:1px solid #c8c8c8;border-bottom:1px solid #c8c8c8"></div>
<div class="t" style="left:677px;top:207px;width:61px;text-align:right;font-size:11.5px;letter-spacing:-0.4px;color:#000">0.4389</div>
<div class="a" style="left:741px;top:201px;width:80px;height:25px;background:#ffffff;border-right:1px solid #c8c8c8;border-bottom:1px solid #c8c8c8"></div>
<div class="t" style="left:741px;top:207px;width:77px;text-align:right;font-size:11.5px;letter-spacing:-0.4px;color:#000">0.3953</div>
<div class="a" style="left:821px;top:201px;width:80px;height:25px;background:#ffffff;border-right:1px solid #c8c8c8;border-bottom:1px solid #c8c8c8"></div>
<div class="t" style="left:821px;top:207px;width:77px;text-align:right;font-size:11.5px;letter-spacing:-0.4px;color:#000">0.4577</div>
<div class="a" style="left:901px;top:201px;width:69px;height:25px;background:#ffffff;border-right:1px solid #c8c8c8;border-bottom:1px solid #c8c8c8"></div>
<div class="t" style="left:901px;top:207px;width:66px;text-align:right;font-size:11.5px;letter-spacing:-0.4px;color:#000">0.4689</div>
<div class="a" style="left:970px;top:201px;width:80px;height:25px;background:#ffffff;border-right:1px solid #c8c8c8;border-bottom:1px solid #c8c8c8"></div>
<div class="t" style="left:970px;top:207px;width:77px;text-align:right;font-size:11.5px;letter-spacing:-0.4px;color:#000">0.4214</div>
<div class="a" style="left:1050px;top:201px;width:88px;height:25px;background:#ffffff;border-right:1px solid #c8c8c8;border-bottom:1px solid #c8c8c8"></div>
<div class="t" style="left:1050px;top:207px;width:85px;text-align:right;font-size:11.5px;letter-spacing:-0.4px;color:#000">0.3402</div>
<div class="a" style="left:1138px;top:201px;width:66px;height:25px;background:#ffffff;border-right:1px solid #c8c8c8;border-bottom:1px solid #c8c8c8"></div>
<div class="t" style="left:1138px;top:207px;width:63px;text-align:right;font-size:11.5px;letter-spacing:-0.4px;color:#000">0.3723</div>
<div class="a" style="left:1204px;top:201px;width:80px;height:25px;background:#ffffff;border-right:1px solid #c8c8c8;border-bottom:1px solid #c8c8c8"></div>
<div class="t" style="left:1204px;top:207px;width:77px;text-align:right;font-size:11.5px;letter-spacing:-0.4px;color:#000">0.4097</div>
<div class="a" style="left:1284px;top:201px;width:93px;height:25px;background:#ffffff;border-right:1px solid #c8c8c8;border-bottom:1px solid #c8c8c8"></div>
<div class="t" style="left:1284px;top:207px;width:90px;text-align:right;font-size:11.5px;letter-spacing:-0.4px;color:#000">0.3990</div>
<div class="a" style="left:1377px;top:201px;width:56px;height:25px;background:#ffffff;border-right:1px solid #c8c8c8;border-bottom:1px solid #c8c8c8"></div>
<div class="t" style="left:1377px;top:207px;width:53px;text-align:right;font-size:11.5px;letter-spacing:-0.4px;color:#000">0.4503</div>
<div class="a" style="left:1433px;top:201px;width:62px;height:25px;background:#ffffff;border-right:1px solid #c8c8c8;border-bottom:1px solid #c8c8c8"></div>
<div class="t" style="left:1433px;top:207px;width:59px;text-align:right;font-size:11.5px;letter-spacing:-0.4px;color:#000">0.4050</div>
<div class="a" style="left:1495px;top:201px;width:58px;height:25px;background:#ffffff;border-right:1px solid #c8c8c8;border-bottom:1px solid #c8c8c8"></div>
<div class="t" style="left:1495px;top:207px;width:55px;text-align:right;font-size:11.5px;letter-spacing:-0.4px;color:#000">0.4626</div>
<div class="a" style="left:1553px;top:201px;width:66px;height:25px;background:#ffffff;border-right:1px solid #c8c8c8;border-bottom:1px solid #c8c8c8"></div>
<div class="t" style="left:1553px;top:207px;width:63px;text-align:right;font-size:11.5px;letter-spacing:-0.4px;color:#000">0.4794</div>
<div class="a" style="left:1619px;top:201px;width:69px;height:25px;background:#ffffff;border-right:1px solid #c8c8c8;border-bottom:1px solid #c8c8c8"></div>
<div class="t" style="left:1619px;top:207px;width:66px;text-align:right;font-size:11.5px;letter-spacing:-0.4px;color:#000">0.4321</div>
<div class="a" style="left:1688px;top:201px;width:80px;height:25px;background:#ffffff;border-right:1px solid #c8c8c8;border-bottom:1px solid #c8c8c8"></div>
<div class="t" style="left:1688px;top:207px;width:77px;text-align:right;font-size:11.5px;letter-spacing:-0.4px;color:#000">0.3830</div>
<div class="a" style="left:10px;top:226px;width:86px;height:25px;background:#f0f0f0;border-right:2px solid #6e6e6e;border-bottom:1px solid #6e6e6e"></div>
<div class="t" style="left:10px;top:231px;width:86px;text-align:center;font-weight:bold;font-size:12px">y</div>
<div class="a" style="left:96px;top:226px;width:64px;height:25px;background:#0078d7;border-right:1px solid #c8c8c8;border-bottom:1px solid #c8c8c8"></div>
<div class="t" style="left:96px;top:232px;width:61px;text-align:right;font-size:11.5px;letter-spacing:-0.4px;color:#fff">0.3595</div>
<div class="a" style="left:160px;top:226px;width:63px;height:25px;background:#ffffff;border-right:1px solid #c8c8c8;border-bottom:1px solid #c8c8c8"></div>
<div class="t" style="left:160px;top:232px;width:60px;text-align:right;font-size:11.5px;letter-spacing:-0.4px;color:#000">0.3527</div>
<div class="a" style="left:223px;top:226px;width:62px;height:25px;background:#ffffff;border-right:1px solid #c8c8c8;border-bottom:1px solid #c8c8c8"></div>
<div class="t" style="left:223px;top:232px;width:59px;text-align:right;font-size:11.5px;letter-spacing:-0.4px;color:#000">0.3592</div>
<div class="a" style="left:285px;top:226px;width:62px;height:25px;background:#ffffff;border-right:1px solid #c8c8c8;border-bottom:1px solid #c8c8c8"></div>
<div class="t" style="left:285px;top:232px;width:59px;text-align:right;font-size:11.5px;letter-spacing:-0.4px;color:#000">0.3673</div>
<div class="a" style="left:347px;top:226px;width:62px;height:25px;background:#ffffff;border-right:1px solid #c8c8c8;border-bottom:1px solid #c8c8c8"></div>
<div class="t" style="left:347px;top:232px;width:59px;text-align:right;font-size:11.5px;letter-spacing:-0.4px;color:#000">0.3789</div>
<div class="a" style="left:409px;top:226px;width:57px;height:25px;background:#ffffff;border-right:1px solid #c8c8c8;border-bottom:1px solid #c8c8c8"></div>
<div class="t" style="left:409px;top:232px;width:54px;text-align:right;font-size:11.5px;letter-spacing:-0.4px;color:#000">0.3686</div>
<div class="a" style="left:466px;top:226px;width:67px;height:25px;background:#ffffff;border-right:1px solid #c8c8c8;border-bottom:1px solid #c8c8c8"></div>
<div class="t" style="left:466px;top:232px;width:64px;text-align:right;font-size:11.5px;letter-spacing:-0.4px;color:#000">0.3763</div>
<div class="a" style="left:533px;top:226px;width:74px;height:25px;background:#ffffff;border-right:1px solid #c8c8c8;border-bottom:1px solid #c8c8c8"></div>
<div class="t" style="left:533px;top:232px;width:71px;text-align:right;font-size:11.5px;letter-spacing:-0.4px;color:#000">0.3792</div>
<div class="a" style="left:607px;top:226px;width:70px;height:25px;background:#ffffff;border-right:1px solid #c8c8c8;border-bottom:1px solid #c8c8c8"></div>
<div class="t" style="left:607px;top:232px;width:67px;text-align:right;font-size:11.5px;letter-spacing:-0.4px;color:#000">0.3806</div>
<div class="a" style="left:677px;top:226px;width:64px;height:25px;background:#ffffff;border-right:1px solid #c8c8c8;border-bottom:1px solid #c8c8c8"></div>
<div class="t" style="left:677px;top:232px;width:61px;text-align:right;font-size:11.5px;letter-spacing:-0.4px;color:#000">0.3844</div>
<div class="a" style="left:741px;top:226px;width:80px;height:25px;background:#ffffff;border-right:1px solid #c8c8c8;border-bottom:1px solid #c8c8c8"></div>
<div class="t" style="left:741px;top:232px;width:77px;text-align:right;font-size:11.5px;letter-spacing:-0.4px;color:#000">0.3633</div>
<div class="a" style="left:821px;top:226px;width:80px;height:25px;background:#ffffff;border-right:1px solid #c8c8c8;border-bottom:1px solid #c8c8c8"></div>
<div class="t" style="left:821px;top:232px;width:77px;text-align:right;font-size:11.5px;letter-spacing:-0.4px;color:#000">0.3751</div>
<div class="a" style="left:901px;top:226px;width:69px;height:25px;background:#ffffff;border-right:1px solid #c8c8c8;border-bottom:1px solid #c8c8c8"></div>
<div class="t" style="left:901px;top:232px;width:66px;text-align:right;font-size:11.5px;letter-spacing:-0.4px;color:#000">0.3784</div>
<div class="a" style="left:970px;top:226px;width:80px;height:25px;background:#ffffff;border-right:1px solid #c8c8c8;border-bottom:1px solid #c8c8c8"></div>
<div class="t" style="left:970px;top:232px;width:77px;text-align:right;font-size:11.5px;letter-spacing:-0.4px;color:#000">0.3727</div>
<div class="a" style="left:1050px;top:226px;width:88px;height:25px;background:#ffffff;border-right:1px solid #c8c8c8;border-bottom:1px solid #c8c8c8"></div>
<div class="t" style="left:1050px;top:232px;width:85px;text-align:right;font-size:11.5px;letter-spacing:-0.4px;color:#000">0.3255</div>
<div class="a" style="left:1138px;top:226px;width:66px;height:25px;background:#ffffff;border-right:1px solid #c8c8c8;border-bottom:1px solid #c8c8c8"></div>
<div class="t" style="left:1138px;top:232px;width:63px;text-align:right;font-size:11.5px;letter-spacing:-0.4px;color:#000">0.3375</div>
<div class="a" style="left:1204px;top:226px;width:80px;height:25px;background:#ffffff;border-right:1px solid #c8c8c8;border-bottom:1px solid #c8c8c8"></div>
<div class="t" style="left:1204px;top:232px;width:77px;text-align:right;font-size:11.5px;letter-spacing:-0.4px;color:#000">0.3571</div>
<div class="a" style="left:1284px;top:226px;width:93px;height:25px;background:#ffffff;border-right:1px solid #c8c8c8;border-bottom:1px solid #c8c8c8"></div>
<div class="t" style="left:1284px;top:232px;width:90px;text-align:right;font-size:11.5px;letter-spacing:-0.4px;color:#000">0.3469</div>
<div class="a" style="left:1377px;top:226px;width:56px;height:25px;background:#ffffff;border-right:1px solid #c8c8c8;border-bottom:1px solid #c8c8c8"></div>
<div class="t" style="left:1377px;top:232px;width:53px;text-align:right;font-size:11.5px;letter-spacing:-0.4px;color:#000">0.3546</div>
<div class="a" style="left:1433px;top:226px;width:62px;height:25px;background:#ffffff;border-right:1px solid #c8c8c8;border-bottom:1px solid #c8c8c8"></div>
<div class="t" style="left:1433px;top:232px;width:59px;text-align:right;font-size:11.5px;letter-spacing:-0.4px;color:#000">0.3327</div>
<div class="a" style="left:1495px;top:226px;width:58px;height:25px;background:#ffffff;border-right:1px solid #c8c8c8;border-bottom:1px solid #c8c8c8"></div>
<div class="t" style="left:1495px;top:232px;width:55px;text-align:right;font-size:11.5px;letter-spacing:-0.4px;color:#000">0.4159</div>
<div class="a" style="left:1553px;top:226px;width:66px;height:25px;background:#ffffff;border-right:1px solid #c8c8c8;border-bottom:1px solid #c8c8c8"></div>
<div class="t" style="left:1553px;top:232px;width:63px;text-align:right;font-size:11.5px;letter-spacing:-0.4px;color:#000">0.4027</div>
<div class="a" style="left:1619px;top:226px;width:69px;height:25px;background:#ffffff;border-right:1px solid #c8c8c8;border-bottom:1px solid #c8c8c8"></div>
<div class="t" style="left:1619px;top:232px;width:66px;text-align:right;font-size:11.5px;letter-spacing:-0.4px;color:#000">0.3405</div>
<div class="a" style="left:1688px;top:226px;width:80px;height:25px;background:#ffffff;border-right:1px solid #c8c8c8;border-bottom:1px solid #c8c8c8"></div>
<div class="t" style="left:1688px;top:232px;width:77px;text-align:right;font-size:11.5px;letter-spacing:-0.4px;color:#000">0.3794</div>
<div class="a" style="left:10px;top:251px;width:86px;height:25px;background:#f0f0f0;border-right:2px solid #6e6e6e;border-bottom:1px solid #6e6e6e"></div>
<div class="t" style="left:10px;top:256px;width:86px;text-align:center;font-weight:bold;font-size:12px">Y</div>
<div class="a" style="left:96px;top:251px;width:64px;height:25px;background:#0078d7;border-right:1px solid #c8c8c8;border-bottom:1px solid #c8c8c8"></div>
<div class="t" style="left:96px;top:257px;width:61px;text-align:right;font-size:11.5px;letter-spacing:-0.4px;color:#fff">76.112</div>
<div class="a" style="left:160px;top:251px;width:63px;height:25px;background:#ffffff;border-right:1px solid #c8c8c8;border-bottom:1px solid #c8c8c8"></div>
<div class="t" style="left:160px;top:257px;width:60px;text-align:right;font-size:11.5px;letter-spacing:-0.4px;color:#000">65.755</div>
<div class="a" style="left:223px;top:251px;width:62px;height:25px;background:#ffffff;border-right:1px solid #c8c8c8;border-bottom:1px solid #c8c8c8"></div>
<div class="t" style="left:223px;top:257px;width:59px;text-align:right;font-size:11.5px;letter-spacing:-0.4px;color:#000">62.299</div>
<div class="a" style="left:285px;top:251px;width:62px;height:25px;background:#ffffff;border-right:1px solid #c8c8c8;border-bottom:1px solid #c8c8c8"></div>
<div class="t" style="left:285px;top:257px;width:59px;text-align:right;font-size:11.5px;letter-spacing:-0.4px;color:#000">50.177</div>
<div class="a" style="left:347px;top:251px;width:62px;height:25px;background:#ffffff;border-right:1px solid #c8c8c8;border-bottom:1px solid #c8c8c8"></div>
<div class="t" style="left:347px;top:257px;width:59px;text-align:right;font-size:11.5px;letter-spacing:-0.4px;color:#000">56.183</div>
<div class="a" style="left:409px;top:251px;width:57px;height:25px;background:#ffffff;border-right:1px solid #c8c8c8;border-bottom:1px solid #c8c8c8"></div>
<div class="t" style="left:409px;top:257px;width:54px;text-align:right;font-size:11.5px;letter-spacing:-0.4px;color:#000">71.088</div>
<div class="a" style="left:466px;top:251px;width:67px;height:25px;background:#ffffff;border-right:1px solid #c8c8c8;border-bottom:1px solid #c8c8c8"></div>
<div class="t" style="left:466px;top:257px;width:64px;text-align:right;font-size:11.5px;letter-spacing:-0.4px;color:#000">49.999</div>
<div class="a" style="left:533px;top:251px;width:74px;height:25px;background:#ffffff;border-right:1px solid #c8c8c8;border-bottom:1px solid #c8c8c8"></div>
<div class="t" style="left:533px;top:257px;width:71px;text-align:right;font-size:11.5px;letter-spacing:-0.4px;color:#000">41.881</div>
<div class="a" style="left:607px;top:251px;width:70px;height:25px;background:#ffffff;border-right:1px solid #c8c8c8;border-bottom:1px solid #c8c8c8"></div>
<div class="t" style="left:607px;top:257px;width:67px;text-align:right;font-size:11.5px;letter-spacing:-0.4px;color:#000">39.885</div>
<div class="a" style="left:677px;top:251px;width:64px;height:25px;background:#ffffff;border-right:1px solid #c8c8c8;border-bottom:1px solid #c8c8c8"></div>
<div class="t" style="left:677px;top:257px;width:61px;text-align:right;font-size:11.5px;letter-spacing:-0.4px;color:#000">34.767</div>
<div class="a" style="left:741px;top:251px;width:80px;height:25px;background:#ffffff;border-right:1px solid #c8c8c8;border-bottom:1px solid #c8c8c8"></div>
<div class="t" style="left:741px;top:257px;width:77px;text-align:right;font-size:11.5px;letter-spacing:-0.4px;color:#000">35.079</div>
<div class="a" style="left:821px;top:251px;width:80px;height:25px;background:#ffffff;border-right:1px solid #c8c8c8;border-bottom:1px solid #c8c8c8"></div>
<div class="t" style="left:821px;top:257px;width:77px;text-align:right;font-size:11.5px;letter-spacing:-0.4px;color:#000">25.400</div>
<div class="a" style="left:901px;top:251px;width:69px;height:25px;background:#ffffff;border-right:1px solid #c8c8c8;border-bottom:1px solid #c8c8c8"></div>
<div class="t" style="left:901px;top:257px;width:66px;text-align:right;font-size:11.5px;letter-spacing:-0.4px;color:#000">20.711</div>
<div class="a" style="left:970px;top:251px;width:80px;height:25px;background:#ffffff;border-right:1px solid #c8c8c8;border-bottom:1px solid #c8c8c8"></div>
<div class="t" style="left:970px;top:257px;width:77px;text-align:right;font-size:11.5px;letter-spacing:-0.4px;color:#000">19.711</div>
<div class="a" style="left:1050px;top:251px;width:88px;height:25px;background:#ffffff;border-right:1px solid #c8c8c8;border-bottom:1px solid #c8c8c8"></div>
<div class="t" style="left:1050px;top:257px;width:85px;text-align:right;font-size:11.5px;letter-spacing:-0.4px;color:#000">57.898</div>
<div class="a" style="left:1138px;top:251px;width:66px;height:25px;background:#ffffff;border-right:1px solid #c8c8c8;border-bottom:1px solid #c8c8c8"></div>
<div class="t" style="left:1138px;top:257px;width:63px;text-align:right;font-size:11.5px;letter-spacing:-0.4px;color:#000">43.189</div>
<div class="a" style="left:1204px;top:251px;width:80px;height:25px;background:#ffffff;border-right:1px solid #c8c8c8;border-bottom:1px solid #c8c8c8"></div>
<div class="t" style="left:1204px;top:257px;width:77px;text-align:right;font-size:11.5px;letter-spacing:-0.4px;color:#000">24.971</div>
<div class="a" style="left:1284px;top:251px;width:93px;height:25px;background:#ffffff;border-right:1px solid #c8c8c8;border-bottom:1px solid #c8c8c8"></div>
<div class="t" style="left:1284px;top:257px;width:90px;text-align:right;font-size:11.5px;letter-spacing:-0.4px;color:#000">21.124</div>
<div class="a" style="left:1377px;top:251px;width:56px;height:25px;background:#ffffff;border-right:1px solid #c8c8c8;border-bottom:1px solid #c8c8c8"></div>
<div class="t" style="left:1377px;top:257px;width:53px;text-align:right;font-size:11.5px;letter-spacing:-0.4px;color:#000">17.732</div>
<div class="a" style="left:1433px;top:251px;width:62px;height:25px;background:#ffffff;border-right:1px solid #c8c8c8;border-bottom:1px solid #c8c8c8"></div>
<div class="t" style="left:1433px;top:257px;width:59px;text-align:right;font-size:11.5px;letter-spacing:-0.4px;color:#000">4.566</div>
<div class="a" style="left:1495px;top:251px;width:58px;height:25px;background:#ffffff;border-right:1px solid #c8c8c8;border-bottom:1px solid #c8c8c8"></div>
<div class="t" style="left:1495px;top:257px;width:55px;text-align:right;font-size:11.5px;letter-spacing:-0.4px;color:#000">28.746</div>
<div class="a" style="left:1553px;top:251px;width:66px;height:25px;background:#ffffff;border-right:1px solid #c8c8c8;border-bottom:1px solid #c8c8c8"></div>
<div class="t" style="left:1553px;top:257px;width:63px;text-align:right;font-size:11.5px;letter-spacing:-0.4px;color:#000">22.470</div>
<div class="a" style="left:1619px;top:251px;width:69px;height:25px;background:#ffffff;border-right:1px solid #c8c8c8;border-bottom:1px solid #c8c8c8"></div>
<div class="t" style="left:1619px;top:257px;width:66px;text-align:right;font-size:11.5px;letter-spacing:-0.4px;color:#000">6.531</div>
<div class="a" style="left:1688px;top:251px;width:80px;height:25px;background:#ffffff;border-right:1px solid #c8c8c8;border-bottom:1px solid #c8c8c8"></div>
<div class="t" style="left:1688px;top:257px;width:77px;text-align:right;font-size:11.5px;letter-spacing:-0.4px;color:#000">24.759</div>
<div class="a" style="left:10px;top:276px;width:86px;height:25px;background:#f0f0f0;border-right:2px solid #6e6e6e;border-bottom:1px solid #6e6e6e"></div>
<div class="t" style="left:10px;top:281px;width:86px;text-align:center;font-weight:bold;font-size:12px">Delta E</div>
<div class="a" style="left:96px;top:276px;width:64px;height:25px;background:#b0ffb0;border-right:1px solid #c8c8c8;border-bottom:1px solid #c8c8c8"></div>
<div class="t" style="left:96px;top:282px;width:61px;text-align:right;font-size:11.5px;letter-spacing:-0.4px;font-weight:bold;color:#000">0.9</div>
<div class="a" style="left:160px;top:276px;width:63px;height:25px;background:#b0ffb0;border-right:1px solid #c8c8c8;border-bottom:1px solid #c8c8c8"></div>
<div class="t" style="left:160px;top:282px;width:60px;text-align:right;font-size:11.5px;letter-spacing:-0.4px;font-weight:bold;color:#000">0.6</div>
<div class="a" style="left:223px;top:276px;width:62px;height:25px;background:#b0ffb0;border-right:1px solid #c8c8c8;border-bottom:1px solid #c8c8c8"></div>
<div class="t" style="left:223px;top:282px;width:59px;text-align:right;font-size:11.5px;letter-spacing:-0.4px;font-weight:bold;color:#000">1.3</div>
<div class="a" style="left:285px;top:276px;width:62px;height:25px;background:#b0ffb0;border-right:1px solid #c8c8c8;border-bottom:1px solid #c8c8c8"></div>
<div class="t" style="left:285px;top:282px;width:59px;text-align:right;font-size:11.5px;letter-spacing:-0.4px;font-weight:bold;color:#000">0.4</div>
<div class="a" style="left:347px;top:276px;width:62px;height:25px;background:#b0ffb0;border-right:1px solid #c8c8c8;border-bottom:1px solid #c8c8c8"></div>
<div class="t" style="left:347px;top:282px;width:59px;text-align:right;font-size:11.5px;letter-spacing:-0.4px;font-weight:bold;color:#000">0.3</div>
<div class="a" style="left:409px;top:276px;width:57px;height:25px;background:#b0ffb0;border-right:1px solid #c8c8c8;border-bottom:1px solid #c8c8c8"></div>
<div class="t" style="left:409px;top:282px;width:54px;text-align:right;font-size:11.5px;letter-spacing:-0.4px;font-weight:bold;color:#000">0.6</div>
<div class="a" style="left:466px;top:276px;width:67px;height:25px;background:#b0ffb0;border-right:1px solid #c8c8c8;border-bottom:1px solid #c8c8c8"></div>
<div class="t" style="left:466px;top:282px;width:64px;text-align:right;font-size:11.5px;letter-spacing:-0.4px;font-weight:bold;color:#000">0.4</div>
<div class="a" style="left:533px;top:276px;width:74px;height:25px;background:#b0ffb0;border-right:1px solid #c8c8c8;border-bottom:1px solid #c8c8c8"></div>
<div class="t" style="left:533px;top:282px;width:71px;text-align:right;font-size:11.5px;letter-spacing:-0.4px;font-weight:bold;color:#000">0.8</div>
<div class="a" style="left:607px;top:276px;width:70px;height:25px;background:#b0ffb0;border-right:1px solid #c8c8c8;border-bottom:1px solid #c8c8c8"></div>
<div class="t" style="left:607px;top:282px;width:67px;text-align:right;font-size:11.5px;letter-spacing:-0.4px;font-weight:bold;color:#000">0.9</div>
<div class="a" style="left:677px;top:276px;width:64px;height:25px;background:#b0ffb0;border-right:1px solid #c8c8c8;border-bottom:1px solid #c8c8c8"></div>
<div class="t" style="left:677px;top:282px;width:61px;text-align:right;font-size:11.5px;letter-spacing:-0.4px;font-weight:bold;color:#000">0.2</div>
<div class="a" style="left:741px;top:276px;width:80px;height:25px;background:#b0ffb0;border-right:1px solid #c8c8c8;border-bottom:1px solid #c8c8c8"></div>
<div class="t" style="left:741px;top:282px;width:77px;text-align:right;font-size:11.5px;letter-spacing:-0.4px;font-weight:bold;color:#000">0.4</div>
<div class="a" style="left:821px;top:276px;width:80px;height:25px;background:#b0ffb0;border-right:1px solid #c8c8c8;border-bottom:1px solid #c8c8c8"></div>
<div class="t" style="left:821px;top:282px;width:77px;text-align:right;font-size:11.5px;letter-spacing:-0.4px;font-weight:bold;color:#000">1.3</div>
<div class="a" style="left:901px;top:276px;width:69px;height:25px;background:#b0ffb0;border-right:1px solid #c8c8c8;border-bottom:1px solid #c8c8c8"></div>
<div class="t" style="left:901px;top:282px;width:66px;text-align:right;font-size:11.5px;letter-spacing:-0.4px;font-weight:bold;color:#000">0.9</div>
<div class="a" style="left:970px;top:276px;width:80px;height:25px;background:#b0ffb0;border-right:1px solid #c8c8c8;border-bottom:1px solid #c8c8c8"></div>
<div class="t" style="left:970px;top:282px;width:77px;text-align:right;font-size:11.5px;letter-spacing:-0.4px;font-weight:bold;color:#000">0.5</div>
<div class="a" style="left:1050px;top:276px;width:88px;height:25px;background:#b0ffb0;border-right:1px solid #c8c8c8;border-bottom:1px solid #c8c8c8"></div>
<div class="t" style="left:1050px;top:282px;width:85px;text-align:right;font-size:11.5px;letter-spacing:-0.4px;font-weight:bold;color:#000">1.1</div>
<div class="a" style="left:1138px;top:276px;width:66px;height:25px;background:#b0ffb0;border-right:1px solid #c8c8c8;border-bottom:1px solid #c8c8c8"></div>
<div class="t" style="left:1138px;top:282px;width:63px;text-align:right;font-size:11.5px;letter-spacing:-0.4px;font-weight:bold;color:#000">1.0</div>
<div class="a" style="left:1204px;top:276px;width:80px;height:25px;background:#b0ffb0;border-right:1px solid #c8c8c8;border-bottom:1px solid #c8c8c8"></div>
<div class="t" style="left:1204px;top:282px;width:77px;text-align:right;font-size:11.5px;letter-spacing:-0.4px;font-weight:bold;color:#000">2.0</div>
<div class="a" style="left:1284px;top:276px;width:93px;height:25px;background:#b0ffb0;border-right:1px solid #c8c8c8;border-bottom:1px solid #c8c8c8"></div>
<div class="t" style="left:1284px;top:282px;width:90px;text-align:right;font-size:11.5px;letter-spacing:-0.4px;font-weight:bold;color:#000">1.1</div>
<div class="a" style="left:1377px;top:276px;width:56px;height:25px;background:#b0ffb0;border-right:1px solid #c8c8c8;border-bottom:1px solid #c8c8c8"></div>
<div class="t" style="left:1377px;top:282px;width:53px;text-align:right;font-size:11.5px;letter-spacing:-0.4px;font-weight:bold;color:#000">0.4</div>
<div class="a" style="left:1433px;top:276px;width:62px;height:25px;background:#b0ffb0;border-right:1px solid #c8c8c8;border-bottom:1px solid #c8c8c8"></div>
<div class="t" style="left:1433px;top:282px;width:59px;text-align:right;font-size:11.5px;letter-spacing:-0.4px;font-weight:bold;color:#000">1.3</div>
<div class="a" style="left:1495px;top:276px;width:58px;height:25px;background:#b0ffb0;border-right:1px solid #c8c8c8;border-bottom:1px solid #c8c8c8"></div>
<div class="t" style="left:1495px;top:282px;width:55px;text-align:right;font-size:11.5px;letter-spacing:-0.4px;font-weight:bold;color:#000">1.3</div>
<div class="a" style="left:1553px;top:276px;width:66px;height:25px;background:#b0ffb0;border-right:1px solid #c8c8c8;border-bottom:1px solid #c8c8c8"></div>
<div class="t" style="left:1553px;top:282px;width:63px;text-align:right;font-size:11.5px;letter-spacing:-0.4px;font-weight:bold;color:#000">1.6</div>
<div class="a" style="left:1619px;top:276px;width:69px;height:25px;background:#b0ffb0;border-right:1px solid #c8c8c8;border-bottom:1px solid #c8c8c8"></div>
<div class="t" style="left:1619px;top:282px;width:66px;text-align:right;font-size:11.5px;letter-spacing:-0.4px;font-weight:bold;color:#000">1.5</div>
<div class="a" style="left:1688px;top:276px;width:80px;height:25px;background:#b0ffb0;border-right:1px solid #c8c8c8;border-bottom:1px solid #c8c8c8"></div>
<div class="t" style="left:1688px;top:282px;width:77px;text-align:right;font-size:11.5px;letter-spacing:-0.4px;font-weight:bold;color:#000">1.3</div>
<div class="a" style="left:10px;top:301px;width:86px;height:25px;background:#f0f0f0;border-right:2px solid #6e6e6e;border-bottom:1px solid #6e6e6e"></div>
<div class="t" style="left:10px;top:306px;width:86px;text-align:center;font-weight:bold;font-size:12px">delta xy</div>
<div class="a" style="left:96px;top:301px;width:64px;height:25px;background:#f0f0f0;border-right:1px solid #c8c8c8;border-bottom:1px solid #c8c8c8"></div>
<div class="t" style="left:96px;top:307px;width:61px;text-align:right;font-size:11.5px;letter-spacing:-0.4px;color:#000">0.0025</div>
<div class="a" style="left:160px;top:301px;width:63px;height:25px;background:#f0f0f0;border-right:1px solid #c8c8c8;border-bottom:1px solid #c8c8c8"></div>
<div class="t" style="left:160px;top:307px;width:60px;text-align:right;font-size:11.5px;letter-spacing:-0.4px;color:#000">0.0020</div>
<div class="a" style="left:223px;top:301px;width:62px;height:25px;background:#f0f0f0;border-right:1px solid #c8c8c8;border-bottom:1px solid #c8c8c8"></div>
<div class="t" style="left:223px;top:307px;width:59px;text-align:right;font-size:11.5px;letter-spacing:-0.4px;color:#000">0.0022</div>
<div class="a" style="left:285px;top:301px;width:62px;height:25px;background:#f0f0f0;border-right:1px solid #c8c8c8;border-bottom:1px solid #c8c8c8"></div>
<div class="t" style="left:285px;top:307px;width:59px;text-align:right;font-size:11.5px;letter-spacing:-0.4px;color:#000">0.0024</div>
<div class="a" style="left:347px;top:301px;width:62px;height:25px;background:#f0f0f0;border-right:1px solid #c8c8c8;border-bottom:1px solid #c8c8c8"></div>
<div class="t" style="left:347px;top:307px;width:59px;text-align:right;font-size:11.5px;letter-spacing:-0.4px;color:#000">0.0010</div>
<div class="a" style="left:409px;top:301px;width:57px;height:25px;background:#f0f0f0;border-right:1px solid #c8c8c8;border-bottom:1px solid #c8c8c8"></div>
<div class="t" style="left:409px;top:307px;width:54px;text-align:right;font-size:11.5px;letter-spacing:-0.4px;color:#000">0.0011</div>
<div class="a" style="left:466px;top:301px;width:67px;height:25px;background:#f0f0f0;border-right:1px solid #c8c8c8;border-bottom:1px solid #c8c8c8"></div>
<div class="t" style="left:466px;top:307px;width:64px;text-align:right;font-size:11.5px;letter-spacing:-0.4px;color:#000">0.0024</div>
<div class="a" style="left:533px;top:301px;width:74px;height:25px;background:#f0f0f0;border-right:1px solid #c8c8c8;border-bottom:1px solid #c8c8c8"></div>
<div class="t" style="left:533px;top:307px;width:71px;text-align:right;font-size:11.5px;letter-spacing:-0.4px;color:#000">0.0028</div>
<div class="a" style="left:607px;top:301px;width:70px;height:25px;background:#f0f0f0;border-right:1px solid #c8c8c8;border-bottom:1px solid #c8c8c8"></div>
<div class="t" style="left:607px;top:307px;width:67px;text-align:right;font-size:11.5px;letter-spacing:-0.4px;color:#000">0.0034</div>
<div class="a" style="left:677px;top:301px;width:64px;height:25px;background:#f0f0f0;border-right:1px solid #c8c8c8;border-bottom:1px solid #c8c8c8"></div>
<div class="t" style="left:677px;top:307px;width:61px;text-align:right;font-size:11.5px;letter-spacing:-0.4px;color:#000">0.0010</div>
<div class="a" style="left:741px;top:301px;width:80px;height:25px;background:#f0f0f0;border-right:1px solid #c8c8c8;border-bottom:1px solid #c8c8c8"></div>
<div class="t" style="left:741px;top:307px;width:77px;text-align:right;font-size:11.5px;letter-spacing:-0.4px;color:#000">0.0008</div>
<div class="a" style="left:821px;top:301px;width:80px;height:25px;background:#f0f0f0;border-right:1px solid #c8c8c8;border-bottom:1px solid #c8c8c8"></div>
<div class="t" style="left:821px;top:307px;width:77px;text-align:right;font-size:11.5px;letter-spacing:-0.4px;color:#000">0.0037</div>
<div class="a" style="left:901px;top:301px;width:69px;height:25px;background:#f0f0f0;border-right:1px solid #c8c8c8;border-bottom:1px solid #c8c8c8"></div>
<div class="t" style="left:901px;top:307px;width:66px;text-align:right;font-size:11.5px;letter-spacing:-0.4px;color:#000">0.0058</div>
<div class="a" style="left:970px;top:301px;width:80px;height:25px;background:#f0f0f0;border-right:1px solid #c8c8c8;border-bottom:1px solid #c8c8c8"></div>
<div class="t" style="left:970px;top:307px;width:77px;text-align:right;font-size:11.5px;letter-spacing:-0.4px;color:#000">0.0025</div>
<div class="a" style="left:1050px;top:301px;width:88px;height:25px;background:#f0f0f0;border-right:1px solid #c8c8c8;border-bottom:1px solid #c8c8c8"></div>
<div class="t" style="left:1050px;top:307px;width:85px;text-align:right;font-size:11.5px;letter-spacing:-0.4px;color:#000">0.0015</div>
<div class="a" style="left:1138px;top:301px;width:66px;height:25px;background:#f0f0f0;border-right:1px solid #c8c8c8;border-bottom:1px solid #c8c8c8"></div>
<div class="t" style="left:1138px;top:307px;width:63px;text-align:right;font-size:11.5px;letter-spacing:-0.4px;color:#000">0.0040</div>
<div class="a" style="left:1204px;top:301px;width:80px;height:25px;background:#f0f0f0;border-right:1px solid #c8c8c8;border-bottom:1px solid #c8c8c8"></div>
<div class="t" style="left:1204px;top:307px;width:77px;text-align:right;font-size:11.5px;letter-spacing:-0.4px;color:#000">0.0060</div>
<div class="a" style="left:1284px;top:301px;width:93px;height:25px;background:#f0f0f0;border-right:1px solid #c8c8c8;border-bottom:1px solid #c8c8c8"></div>
<div class="t" style="left:1284px;top:307px;width:90px;text-align:right;font-size:11.5px;letter-spacing:-0.4px;color:#000">0.0040</div>
<div class="a" style="left:1377px;top:301px;width:56px;height:25px;background:#f0f0f0;border-right:1px solid #c8c8c8;border-bottom:1px solid #c8c8c8"></div>
<div class="t" style="left:1377px;top:307px;width:53px;text-align:right;font-size:11.5px;letter-spacing:-0.4px;color:#000">0.0036</div>
<div class="a" style="left:1433px;top:301px;width:62px;height:25px;background:#f0f0f0;border-right:1px solid #c8c8c8;border-bottom:1px solid #c8c8c8"></div>
<div class="t" style="left:1433px;top:307px;width:59px;text-align:right;font-size:11.5px;letter-spacing:-0.4px;color:#000">0.0111</div>
<div class="a" style="left:1495px;top:301px;width:58px;height:25px;background:#f0f0f0;border-right:1px solid #c8c8c8;border-bottom:1px solid #c8c8c8"></div>
<div class="t" style="left:1495px;top:307px;width:55px;text-align:right;font-size:11.5px;letter-spacing:-0.4px;color:#000">0.0046</div>
<div class="a" style="left:1553px;top:301px;width:66px;height:25px;background:#f0f0f0;border-right:1px solid #c8c8c8;border-bottom:1px solid #c8c8c8"></div>
<div class="t" style="left:1553px;top:307px;width:63px;text-align:right;font-size:11.5px;letter-spacing:-0.4px;color:#000">0.0073</div>
<div class="a" style="left:1619px;top:301px;width:69px;height:25px;background:#f0f0f0;border-right:1px solid #c8c8c8;border-bottom:1px solid #c8c8c8"></div>
<div class="t" style="left:1619px;top:307px;width:66px;text-align:right;font-size:11.5px;letter-spacing:-0.4px;color:#000">0.0121</div>
<div class="a" style="left:1688px;top:301px;width:80px;height:25px;background:#f0f0f0;border-right:1px solid #c8c8c8;border-bottom:1px solid #c8c8c8"></div>
<div class="t" style="left:1688px;top:307px;width:77px;text-align:right;font-size:11.5px;letter-spacing:-0.4px;color:#000">0.0045</div>
<div class="a" style="left:10px;top:326px;width:86px;height:25px;background:#f0f0f0;border-right:2px solid #6e6e6e;border-bottom:1px solid #6e6e6e"></div>
<div class="t" style="left:10px;top:331px;width:86px;text-align:center;font-weight:bold;font-size:12px">delta L</div>
<div class="a" style="left:96px;top:326px;width:64px;height:25px;background:#e0e0e0;border-right:1px solid #c8c8c8;border-bottom:1px solid #c8c8c8"></div>
<div class="t" style="left:96px;top:332px;width:61px;text-align:right;font-size:11.5px;letter-spacing:-0.4px;color:#000">+2.4 %</div>
<div class="a" style="left:160px;top:326px;width:63px;height:25px;background:#e0e0e0;border-right:1px solid #c8c8c8;border-bottom:1px solid #c8c8c8"></div>
<div class="t" style="left:160px;top:332px;width:60px;text-align:right;font-size:11.5px;letter-spacing:-0.4px;color:#000">-1.7 %</div>
<div class="a" style="left:223px;top:326px;width:62px;height:25px;background:#e0e0e0;border-right:1px solid #c8c8c8;border-bottom:1px solid #c8c8c8"></div>
<div class="t" style="left:223px;top:332px;width:59px;text-align:right;font-size:11.5px;letter-spacing:-0.4px;color:#000">+1.1 %</div>
<div class="a" style="left:285px;top:326px;width:62px;height:25px;background:#e0e0e0;border-right:1px solid #c8c8c8;border-bottom:1px solid #c8c8c8"></div>
<div class="t" style="left:285px;top:332px;width:59px;text-align:right;font-size:11.5px;letter-spacing:-0.4px;color:#000">+0.6 %</div>
<div class="a" style="left:347px;top:326px;width:62px;height:25px;background:#e0e0e0;border-right:1px solid #c8c8c8;border-bottom:1px solid #c8c8c8"></div>
<div class="t" style="left:347px;top:332px;width:59px;text-align:right;font-size:11.5px;letter-spacing:-0.4px;color:#000">+1.0 %</div>
<div class="a" style="left:409px;top:326px;width:57px;height:25px;background:#e0e0e0;border-right:1px solid #c8c8c8;border-bottom:1px solid #c8c8c8"></div>
<div class="t" style="left:409px;top:332px;width:54px;text-align:right;font-size:11.5px;letter-spacing:-0.4px;color:#000">+0.6 %</div>
<div class="a" style="left:466px;top:326px;width:67px;height:25px;background:#e0e0e0;border-right:1px solid #c8c8c8;border-bottom:1px solid #c8c8c8"></div>
<div class="t" style="left:466px;top:332px;width:64px;text-align:right;font-size:11.5px;letter-spacing:-0.4px;color:#000">+0.7 %</div>
<div class="a" style="left:533px;top:326px;width:74px;height:25px;background:#e0e0e0;border-right:1px solid #c8c8c8;border-bottom:1px solid #c8c8c8"></div>
<div class="t" style="left:533px;top:332px;width:71px;text-align:right;font-size:11.5px;letter-spacing:-0.4px;color:#000">+1.0 %</div>
<div class="a" style="left:607px;top:326px;width:70px;height:25px;background:#e0e0e0;border-right:1px solid #c8c8c8;border-bottom:1px solid #c8c8c8"></div>
<div class="t" style="left:607px;top:332px;width:67px;text-align:right;font-size:11.5px;letter-spacing:-0.4px;color:#000">-0.7 %</div>
<div class="a" style="left:677px;top:326px;width:64px;height:25px;background:#e0e0e0;border-right:1px solid #c8c8c8;border-bottom:1px solid #c8c8c8"></div>
<div class="t" style="left:677px;top:332px;width:61px;text-align:right;font-size:11.5px;letter-spacing:-0.4px;color:#000">+0.3 %</div>
<div class="a" style="left:741px;top:326px;width:80px;height:25px;background:#e0e0e0;border-right:1px solid #c8c8c8;border-bottom:1px solid #c8c8c8"></div>
<div class="t" style="left:741px;top:332px;width:77px;text-align:right;font-size:11.5px;letter-spacing:-0.4px;color:#000">+0.7 %</div>
<div class="a" style="left:821px;top:326px;width:80px;height:25px;background:#e0e0e0;border-right:1px solid #c8c8c8;border-bottom:1px solid #c8c8c8"></div>
<div class="t" style="left:821px;top:332px;width:77px;text-align:right;font-size:11.5px;letter-spacing:-0.4px;color:#000">+3.1 %</div>
<div class="a" style="left:901px;top:326px;width:69px;height:25px;background:#e0e0e0;border-right:1px solid #c8c8c8;border-bottom:1px solid #c8c8c8"></div>
<div class="t" style="left:901px;top:332px;width:66px;text-align:right;font-size:11.5px;letter-spacing:-0.4px;color:#000">+1.5 %</div>
<div class="a" style="left:970px;top:326px;width:80px;height:25px;background:#e0e0e0;border-right:1px solid #c8c8c8;border-bottom:1px solid #c8c8c8"></div>
<div class="t" style="left:970px;top:332px;width:77px;text-align:right;font-size:11.5px;letter-spacing:-0.4px;color:#000">+1.1 %</div>
<div class="a" style="left:1050px;top:326px;width:88px;height:25px;background:#e0e0e0;border-right:1px solid #c8c8c8;border-bottom:1px solid #c8c8c8"></div>
<div class="t" style="left:1050px;top:332px;width:85px;text-align:right;font-size:11.5px;letter-spacing:-0.4px;color:#000">-4.3 %</div>
<div class="a" style="left:1138px;top:326px;width:66px;height:25px;background:#e0e0e0;border-right:1px solid #c8c8c8;border-bottom:1px solid #c8c8c8"></div>
<div class="t" style="left:1138px;top:332px;width:63px;text-align:right;font-size:11.5px;letter-spacing:-0.4px;color:#000">+0.5 %</div>
<div class="a" style="left:1204px;top:326px;width:80px;height:25px;background:#e0e0e0;border-right:1px solid #c8c8c8;border-bottom:1px solid #c8c8c8"></div>
<div class="t" style="left:1204px;top:332px;width:77px;text-align:right;font-size:11.5px;letter-spacing:-0.4px;color:#000">+1.3 %</div>
<div class="a" style="left:1284px;top:326px;width:93px;height:25px;background:#e0e0e0;border-right:1px solid #c8c8c8;border-bottom:1px solid #c8c8c8"></div>
<div class="t" style="left:1284px;top:332px;width:90px;text-align:right;font-size:11.5px;letter-spacing:-0.4px;color:#000">+1.6 %</div>
<div class="a" style="left:1377px;top:326px;width:56px;height:25px;background:#e0e0e0;border-right:1px solid #c8c8c8;border-bottom:1px solid #c8c8c8"></div>
<div class="t" style="left:1377px;top:332px;width:53px;text-align:right;font-size:11.5px;letter-spacing:-0.4px;color:#000">+1.0 %</div>
<div class="a" style="left:1433px;top:326px;width:62px;height:25px;background:#e0e0e0;border-right:1px solid #c8c8c8;border-bottom:1px solid #c8c8c8"></div>
<div class="t" style="left:1433px;top:332px;width:59px;text-align:right;font-size:11.5px;letter-spacing:-0.4px;color:#000">-1.1 %</div>
<div class="a" style="left:1495px;top:326px;width:58px;height:25px;background:#e0e0e0;border-right:1px solid #c8c8c8;border-bottom:1px solid #c8c8c8"></div>
<div class="t" style="left:1495px;top:332px;width:55px;text-align:right;font-size:11.5px;letter-spacing:-0.4px;color:#000">+2.3 %</div>
<div class="a" style="left:1553px;top:326px;width:66px;height:25px;background:#e0e0e0;border-right:1px solid #c8c8c8;border-bottom:1px solid #c8c8c8"></div>
<div class="t" style="left:1553px;top:332px;width:63px;text-align:right;font-size:11.5px;letter-spacing:-0.4px;color:#000">+2.1 %</div>
<div class="a" style="left:1619px;top:326px;width:69px;height:25px;background:#e0e0e0;border-right:1px solid #c8c8c8;border-bottom:1px solid #c8c8c8"></div>
<div class="t" style="left:1619px;top:332px;width:66px;text-align:right;font-size:11.5px;letter-spacing:-0.4px;color:#000">-3.7 %</div>
<div class="a" style="left:1688px;top:326px;width:80px;height:25px;background:#e0e0e0;border-right:1px solid #c8c8c8;border-bottom:1px solid #c8c8c8"></div>
<div class="t" style="left:1688px;top:332px;width:77px;text-align:right;font-size:11.5px;letter-spacing:-0.4px;color:#000">+1.3 %</div>
<div class="a" style="left:10px;top:351px;width:86px;height:4px;background:#f0f0f0;border-right:2px solid #6e6e6e"></div>
<div class="a" style="left:96px;top:351px;width:64px;height:4px;background:#f0f0f0;border-right:1px solid #c8c8c8"></div>
<div class="a" style="left:160px;top:351px;width:63px;height:4px;background:#f0f0f0;border-right:1px solid #c8c8c8"></div>
<div class="a" style="left:223px;top:351px;width:62px;height:4px;background:#f0f0f0;border-right:1px solid #c8c8c8"></div>
<div class="a" style="left:285px;top:351px;width:62px;height:4px;background:#f0f0f0;border-right:1px solid #c8c8c8"></div>
<div class="a" style="left:347px;top:351px;width:62px;height:4px;background:#f0f0f0;border-right:1px solid #c8c8c8"></div>
<div class="a" style="left:409px;top:351px;width:57px;height:4px;background:#f0f0f0;border-right:1px solid #c8c8c8"></div>
<div class="a" style="left:466px;top:351px;width:67px;height:4px;background:#f0f0f0;border-right:1px solid #c8c8c8"></div>
<div class="a" style="left:533px;top:351px;width:74px;height:4px;background:#f0f0f0;border-right:1px solid #c8c8c8"></div>
<div class="a" style="left:607px;top:351px;width:70px;height:4px;background:#f0f0f0;border-right:1px solid #c8c8c8"></div>
<div class="a" style="left:677px;top:351px;width:64px;height:4px;background:#f0f0f0;border-right:1px solid #c8c8c8"></div>
<div class="a" style="left:741px;top:351px;width:80px;height:4px;background:#f0f0f0;border-right:1px solid #c8c8c8"></div>
<div class="a" style="left:821px;top:351px;width:80px;height:4px;background:#f0f0f0;border-right:1px solid #c8c8c8"></div>
<div class="a" style="left:901px;top:351px;width:69px;height:4px;background:#f0f0f0;border-right:1px solid #c8c8c8"></div>
<div class="a" style="left:970px;top:351px;width:80px;height:4px;background:#f0f0f0;border-right:1px solid #c8c8c8"></div>
<div class="a" style="left:1050px;top:351px;width:88px;height:4px;background:#f0f0f0;border-right:1px solid #c8c8c8"></div>
<div class="a" style="left:1138px;top:351px;width:66px;height:4px;background:#f0f0f0;border-right:1px solid #c8c8c8"></div>
<div class="a" style="left:1204px;top:351px;width:80px;height:4px;background:#f0f0f0;border-right:1px solid #c8c8c8"></div>
<div class="a" style="left:1284px;top:351px;width:93px;height:4px;background:#f0f0f0;border-right:1px solid #c8c8c8"></div>
<div class="a" style="left:1377px;top:351px;width:56px;height:4px;background:#f0f0f0;border-right:1px solid #c8c8c8"></div>
<div class="a" style="left:1433px;top:351px;width:62px;height:4px;background:#f0f0f0;border-right:1px solid #c8c8c8"></div>
<div class="a" style="left:1495px;top:351px;width:58px;height:4px;background:#f0f0f0;border-right:1px solid #c8c8c8"></div>
<div class="a" style="left:1553px;top:351px;width:66px;height:4px;background:#f0f0f0;border-right:1px solid #c8c8c8"></div>
<div class="a" style="left:1619px;top:351px;width:69px;height:4px;background:#f0f0f0;border-right:1px solid #c8c8c8"></div>
<div class="a" style="left:1688px;top:351px;width:80px;height:4px;background:#f0f0f0;border-right:1px solid #c8c8c8"></div>
<div class="a" style="left:1768px;top:178px;width:4px;height:177px;background:#8a8a8a"></div>
<div class="a" style="left:1790px;top:179px;width:17px;height:2px;background:#20d020"></div>
<div class="a" style="left:1779px;top:195px;width:2px;height:141px;background:#9a9a9a"></div>
<div class="a" style="left:10px;top:355px;width:1762px;height:18px;background:#f0f0f0"></div>
<svg class="a" style="left:14px;top:359px" width="8" height="10"><path d="M7 0 L0 5 L7 10z" fill="#a8a8a8"/></svg>
<svg class="a" style="left:1758px;top:359px" width="8" height="10"><path d="M0 0 L7 5 L0 10z" fill="#a8a8a8"/></svg>
<div class="a" style="left:1810px;top:158px;width:92px;height:227px;background:#8c8c8c"></div>
<div class="a" style="left:1812px;top:161px;width:85px;height:101px;background:#ebebeb;border:2px solid #9d9d9d;border-top-left-radius:6px;border-top-right-radius:6px;border-right-color:#a8a8a8"></div><div class="a" style="left:1814px;top:163px;width:81px;height:18px;background:linear-gradient(90deg,#e2eaf5,#edf2f9);border-bottom:1px solid #a9a9a9;border-top-left-radius:5px;border-top-right-radius:5px"></div><div class="t" style="left:1821px;top:164px;font-weight:bold;color:#4a4a4a;font-size:13.5px;letter-spacing:0.1px">Display</div>
<div class="a" style="left:1816px;top:180px;width:78px;height:80px;background:#ececec"></div>
<svg class="a" style="left:1822px;top:181px" width="13" height="13"><circle cx="6.5" cy="6.5" r="5.5" fill="#fff" stroke="#c0c0c0" stroke-width="1"/></svg>
<div class="t" style="left:1840px;top:181px;font-size:13px;color:#a8a8a8">Sensor</div>
<svg class="a" style="left:1822px;top:197px" width="13" height="13"><circle cx="6.5" cy="6.5" r="5.5" fill="#fff" stroke="#555" stroke-width="1"/></svg>
<div class="t" style="left:1840px;top:197px;font-size:13px;color:#000">RGB</div>
<svg class="a" style="left:1822px;top:213px" width="13" height="13"><circle cx="6.5" cy="6.5" r="5.5" fill="#fff" stroke="#555" stroke-width="1"/></svg>
<div class="t" style="left:1840px;top:213px;font-size:13px;color:#000">XYZ</div>
<svg class="a" style="left:1822px;top:229px" width="13" height="13"><circle cx="6.5" cy="6.5" r="5.5" fill="#fff" stroke="#555" stroke-width="1"/></svg>
<div class="t" style="left:1840px;top:229px;font-size:13px;color:#000">xyz</div>
<svg class="a" style="left:1822px;top:245px" width="13" height="13"><circle cx="6.5" cy="6.5" r="5.5" fill="#fff" stroke="#555" stroke-width="1"/><circle cx="6.5" cy="6.5" r="2" fill="#000"/></svg>
<div class="t" style="left:1840px;top:245px;font-size:13px;color:#000">xyY</div>
<div class="a" style="left:1813px;top:264px;width:82px;height:29px;background:#eeeeee;border-right:1px solid #9a9a9a;border-bottom:1px solid #9a9a9a;border-top:1px solid #fff;border-left:1px solid #fff"></div>
<div class="t" style="left:1862px;top:271px;font-size:13px">Go</div>
<div class="a" style="left:1813px;top:294px;width:82px;height:29px;background:#eeeeee;border-right:1px solid #9a9a9a;border-bottom:1px solid #9a9a9a;border-top:1px solid #fff;border-left:1px solid #fff"></div>
<div class="t" style="left:1849px;top:301px;font-size:13px">Delete</div>
<div class="a" style="left:1813px;top:324px;width:82px;height:29px;background:#eeeeee;border-right:1px solid #9a9a9a;border-bottom:1px solid #9a9a9a;border-top:1px solid #fff;border-left:1px solid #fff"></div>
<div class="t" style="left:1857px;top:331px;font-size:13px">Refs</div>
<svg class="a" style="left:1817px;top:266px" width="34" height="27"><path d="M1 3 h7 v22 h-7z M26 3 h7 v22 h-7z" fill="#b8b8b8" stroke="#222" stroke-width="0.8"/><path d="M3 6 h3 v3 h-3z M3 12 h3 v3 h-3z M3 18 h3 v3 h-3z M28 6 h3 v3 h-3z M28 12 h3 v3 h-3z M28 18 h3 v3 h-3z" fill="#fff" stroke="#333" stroke-width="0.5"/><path d="M9 1 L22 0 L24 7 L11 9z" fill="#e02030" stroke="#600" stroke-width="0.6"/><path d="M10 8 L23 6 L25 16 L12 18z" fill="#20b040" stroke="#063" stroke-width="0.6"/><path d="M13 18 L25 15 L29 24 L17 27z" fill="#2a70e8" stroke="#024" stroke-width="0.6"/></svg>
<svg class="a" style="left:1818px;top:296px" width="30" height="27"><defs><linearGradient id="bin" x1="0" x2="1"><stop offset="0" stop-color="#5ab0f0"/><stop offset="0.5" stop-color="#d8f0ff"/><stop offset="1" stop-color="#3a90d8"/></linearGradient></defs><path d="M2 4 Q15 -1 28 4 L24 25 Q15 28 7 25z" fill="url(#bin)" stroke="#3a80c0" stroke-width="0.8"/><path d="M11 13 a5 5 0 0 1 9 -2 l2 -2 v6 h-6 l2 -2 a3 3 0 0 0 -5 1z M20 16 a5 5 0 0 1 -9 2 l-2 2 v-6 h6 l-2 2 a3 3 0 0 0 5 -1z" fill="#20a030"/></svg>
<svg class="a" style="left:1818px;top:327px" width="34" height="26"><path d="M1 25 V14 l2 -4 2 4 V25z" fill="#1010a0"/><path d="M5 25 V12 l2 -2 V25z" fill="#e010e0"/><path d="M7 25 V8 l3 -3 3 5 V25z" fill="#1020f0"/><path d="M13 25 V10 l3 2 V25z" fill="#00e0f0"/><path d="M16 25 V9 l3 -2 V25z" fill="#00d000"/><path d="M19 25 V5 l2 -4 3 5 V25z" fill="#f0f000"/><path d="M24 25 V9 l3 -2 V25z" fill="#800000"/><path d="M27 25 V12 l3 -1 2 3 V25z" fill="#f01010"/></svg>
<div class="a" style="left:1818px;top:358px;width:57px;height:19px;background:#efefef"></div>
<div class="a" style="left:1821px;top:361px;width:12px;height:12px;background:#fff;border:1px solid #555;border-right-color:#ccc;border-bottom-color:#ccc"></div>
<div class="t" style="left:1838px;top:359px;font-size:13px">Edit</div>
<div class="a" style="left:2px;top:380px;width:1898px;height:4px;background:#8a8a8a"></div>
<div class="a" style="left:1897px;top:384px;width:3px;height:635px;background:#8a8a8a"></div>
<div class="a" style="left:5px;top:386px;width:380px;height:630px;background:#ebebeb;border:2px solid #9d9d9d;border-top-left-radius:6px;border-top-right-radius:6px;border-right-color:#a8a8a8"></div><div class="a" style="left:7px;top:388px;width:376px;height:18px;background:linear-gradient(90deg,#e2eaf5,#edf2f9);border-bottom:1px solid #a9a9a9;border-top-left-radius:5px;border-top-right-radius:5px"></div><div class="t" style="left:14px;top:389px;font-weight:bold;color:#4a4a4a;font-size:13.5px;letter-spacing:0.1px">Selected color</div>
<div class="a" style="left:14px;top:409px;width:114px;height:15px;background:#f0f0f0"></div>
<div class="t" style="left:18px;top:408px;font-size:13px">RGB Levels</div>
<div class="a" style="left:230px;top:406px;width:128px;height:16px;background:#f0f0f0"></div>
<div class="t" style="left:241px;top:405px;font-size:14px">Current Measure</div>
<div class="a" style="left:14px;top:433px;width:200px;height:86px;background:#efefef"></div>
<div class="a" style="left:14px;top:477px;width:200px;height:1px;border-top:1px dashed #555"></div>
<svg class="a" style="left:14px;top:494px" width="201" height="26"><path d="M0 22 C3 13 46 13 49 22z" fill="#b01010" stroke="#000" stroke-width="1.2"/><path d="M51 22 C54 13 98 13 101 22z" fill="#10a010" stroke="#000" stroke-width="1.2"/><path d="M103 22 C106 13 149 13 152 22z" fill="#1010b0" stroke="#000" stroke-width="1.2"/><path d="M154 22 C157 13 197 13 200 22z" fill="#d09818" stroke="#000" stroke-width="1.2"/><rect x="0" y="20" width="200" height="5" fill="#000"/><g font-family="Liberation Serif" font-weight="bold" font-size="11" fill="#000"><text x="12" y="12">0.0%</text><text x="63" y="12">0.0%</text><text x="114" y="12">0.0%</text><text x="161" y="12">dE 0.0</text></g></svg>
<div class="a" style="left:16px;top:533px;width:96px;height:74px;background:#000"></div>
<div class="a" style="left:112px;top:533px;width:96px;height:74px;background:#7f7772"></div>
<div class="t" style="left:16px;top:533px;width:96px;text-align:center;font-size:13px;font-weight:bold;color:#1e3456;line-height:16px">0,0,0<br>Measure</div>
<div class="t" style="left:112px;top:533px;width:96px;text-align:center;font-size:13px;font-weight:bold;color:#1e3456;line-height:16px">126,121,114<br>Reference</div>
<div class="a" style="left:14px;top:622px;width:46px;height:15px;background:#f0f0f0"></div>
<div class="t" style="left:18px;top:621px;font-size:13px">Target</div>
<div class="a" style="left:50px;top:638px;width:116px;height:89px;border:1px solid #000;background:conic-gradient(from 0deg at 50% 50%,#40ff00,#c8e000 12%,#ffa000 18%,#ff0000 27%,#ff0060 37%,#e000a0 42%,#8000d0 50%,#2000ff 60%,#0040e0 66%,#0090b0 75%,#00c0a0 82%,#00ff70 88%,#40ff00)"></div>
<div class="a" style="left:67px;top:651px;width:82px;height:62px;background:#7f7772;border:1px solid #fff;border-radius:7px"></div>
<svg class="a" style="left:50px;top:638px" width="116" height="89"><path d="M50 44.5 H102 M58 44.5 h-2" stroke="#fff" stroke-width="1"/><path d="M15 44.5 H101" stroke="#000" stroke-width="1" stroke-dasharray="3 2"/><path d="M58.5 13 V75" stroke="#fff" stroke-width="1"/><path d="M58.5 13 V75" stroke="#000" stroke-width="1" stroke-dasharray="3 2"/><ellipse cx="58.5" cy="44.5" rx="21" ry="15.5" fill="none" stroke="#fff" stroke-width="1.2"/><ellipse cx="58.5" cy="44.5" rx="21" ry="15.5" fill="none" stroke="#000" stroke-width="1.2" stroke-dasharray="3 3"/><path d="M49 50 L78 29" stroke="#8a5a00" stroke-width="2"/><path d="M49 49.5 L78 28.5" stroke="#f0d000" stroke-width="1"/><path d="M47 52 l2 -7 5 4z" fill="#f0f000" stroke="#806000" stroke-width="0.5"/><path d="M66 30 l5 -4 4 4 -5 4z" fill="#00ff00" stroke="#205020" stroke-width="0.5"/><path d="M70 35 l5 -5 1 4 -4 3z" fill="#2040ff"/><path d="M75 28 l5 -1 -2 3z" fill="#e02000"/></svg>
<div class="a" style="left:219px;top:429px;width:156px;height:580px;background:#ececec;border:1px solid #d0d0d0"></div>
<div class="a" style="left:220px;top:430px;width:135px;height:577px;background:#a0a0a0;border-left:2px solid #7a7a7a;border-top:2px solid #7a7a7a"></div>
<div class="a" style="left:222px;top:431px;width:53px;height:23px;background:#f0f0f0;border-right:1px solid #6e6e6e;border-bottom:1px solid #6e6e6e"></div>
<div class="t" style="left:222px;top:436px;width:52px;text-align:center;font-weight:bold;font-size:12px">Y cd/m&sup2;</div>
<div class="a" style="left:275px;top:431px;width:80px;height:23px;background:#ffffff;border-bottom:1px solid #c8c8c8"></div>
<div class="t" style="left:275px;top:436px;width:78px;text-align:right;font-size:11.5px;letter-spacing:-0.3px">0.000</div>
<div class="a" style="left:222px;top:454px;width:53px;height:23px;background:#f0f0f0;border-right:1px solid #6e6e6e;border-bottom:1px solid #6e6e6e"></div>
<div class="t" style="left:222px;top:459px;width:52px;text-align:center;font-weight:bold;font-size:12px">Y ftL</div>
<div class="a" style="left:275px;top:454px;width:80px;height:23px;background:#ffffff;border-bottom:1px solid #c8c8c8"></div>
<div class="t" style="left:275px;top:459px;width:78px;text-align:right;font-size:11.5px;letter-spacing:-0.3px">0.0000</div>
<div class="a" style="left:222px;top:477px;width:53px;height:23px;background:#f0f0f0;border-right:1px solid #6e6e6e;border-bottom:1px solid #6e6e6e"></div>
<div class="t" style="left:222px;top:482px;width:52px;text-align:center;font-weight:bold;font-size:12px">T&deg;</div>
<div class="a" style="left:275px;top:477px;width:80px;height:23px;background:#ffffff;border-bottom:1px solid #c8c8c8"></div>
<div class="t" style="left:275px;top:482px;width:78px;text-align:right;font-size:11.5px;letter-spacing:-0.3px">5454</div>
<div class="a" style="left:222px;top:500px;width:53px;height:23px;background:#f0f0f0;border-right:1px solid #6e6e6e;border-bottom:1px solid #6e6e6e"></div>
<div class="t" style="left:222px;top:505px;width:52px;text-align:center;font-weight:bold;font-size:12px">X</div>
<div class="a" style="left:275px;top:500px;width:80px;height:23px;background:#e0e0e0;border-bottom:1px solid #c8c8c8"></div>
<div class="t" style="left:275px;top:505px;width:78px;text-align:right;font-size:11.5px;letter-spacing:-0.3px">0.00</div>
<div class="a" style="left:222px;top:523px;width:53px;height:23px;background:#f0f0f0;border-right:1px solid #6e6e6e;border-bottom:1px solid #6e6e6e"></div>
<div class="t" style="left:222px;top:528px;width:52px;text-align:center;font-weight:bold;font-size:12px">Y</div>
<div class="a" style="left:275px;top:523px;width:80px;height:23px;background:#e0e0e0;border-bottom:1px solid #c8c8c8"></div>
<div class="t" style="left:275px;top:528px;width:78px;text-align:right;font-size:11.5px;letter-spacing:-0.3px">0.00</div>
<div class="a" style="left:222px;top:546px;width:53px;height:23px;background:#f0f0f0;border-right:1px solid #6e6e6e;border-bottom:1px solid #6e6e6e"></div>
<div class="t" style="left:222px;top:551px;width:52px;text-align:center;font-weight:bold;font-size:12px">Z</div>
<div class="a" style="left:275px;top:546px;width:80px;height:23px;background:#e0e0e0;border-bottom:1px solid #c8c8c8"></div>
<div class="t" style="left:275px;top:551px;width:78px;text-align:right;font-size:11.5px;letter-spacing:-0.3px">0.00</div>
<div class="a" style="left:222px;top:569px;width:53px;height:23px;background:#f0f0f0;border-right:1px solid #6e6e6e;border-bottom:1px solid #6e6e6e"></div>
<div class="t" style="left:222px;top:574px;width:52px;text-align:center;font-weight:bold;font-size:12px">R</div>
<div class="a" style="left:275px;top:569px;width:80px;height:23px;background:#ffffff;border-bottom:1px solid #c8c8c8"></div>
<div class="t" style="left:275px;top:574px;width:78px;text-align:right;font-size:11.5px;letter-spacing:-0.3px">0.00</div>
<div class="a" style="left:222px;top:592px;width:53px;height:23px;background:#f0f0f0;border-right:1px solid #6e6e6e;border-bottom:1px solid #6e6e6e"></div>
<div class="t" style="left:222px;top:597px;width:52px;text-align:center;font-weight:bold;font-size:12px">G</div>
<div class="a" style="left:275px;top:592px;width:80px;height:23px;background:#ffffff;border-bottom:1px solid #c8c8c8"></div>
<div class="t" style="left:275px;top:597px;width:78px;text-align:right;font-size:11.5px;letter-spacing:-0.3px">0.00</div>
<div class="a" style="left:222px;top:615px;width:53px;height:23px;background:#f0f0f0;border-right:1px solid #6e6e6e;border-bottom:1px solid #6e6e6e"></div>
<div class="t" style="left:222px;top:620px;width:52px;text-align:center;font-weight:bold;font-size:12px">B</div>
<div class="a" style="left:275px;top:615px;width:80px;height:23px;background:#ffffff;border-bottom:1px solid #c8c8c8"></div>
<div class="t" style="left:275px;top:620px;width:78px;text-align:right;font-size:11.5px;letter-spacing:-0.3px">0.00</div>
<div class="a" style="left:222px;top:638px;width:53px;height:23px;background:#f0f0f0;border-right:1px solid #6e6e6e;border-bottom:1px solid #6e6e6e"></div>
<div class="t" style="left:222px;top:643px;width:52px;text-align:center;font-weight:bold;font-size:12px">x</div>
<div class="a" style="left:275px;top:638px;width:80px;height:23px;background:#e0e0e0;border-bottom:1px solid #c8c8c8"></div>
<div class="t" style="left:275px;top:643px;width:78px;text-align:right;font-size:11.5px;letter-spacing:-0.3px">0.333</div>
<div class="a" style="left:222px;top:661px;width:53px;height:23px;background:#f0f0f0;border-right:1px solid #6e6e6e;border-bottom:1px solid #6e6e6e"></div>
<div class="t" style="left:222px;top:666px;width:52px;text-align:center;font-weight:bold;font-size:12px">y</div>
<div class="a" style="left:275px;top:661px;width:80px;height:23px;background:#e0e0e0;border-bottom:1px solid #c8c8c8"></div>
<div class="t" style="left:275px;top:666px;width:78px;text-align:right;font-size:11.5px;letter-spacing:-0.3px">0.333</div>
<div class="a" style="left:222px;top:684px;width:53px;height:23px;background:#f0f0f0;border-right:1px solid #6e6e6e;border-bottom:1px solid #6e6e6e"></div>
<div class="t" style="left:222px;top:689px;width:52px;text-align:center;font-weight:bold;font-size:12px">Y</div>
<div class="a" style="left:275px;top:684px;width:80px;height:23px;background:#e0e0e0;border-bottom:1px solid #c8c8c8"></div>
<div class="t" style="left:275px;top:689px;width:78px;text-align:right;font-size:11.5px;letter-spacing:-0.3px">0.000</div>
<div class="a" style="left:222px;top:707px;width:53px;height:23px;background:#f0f0f0;border-right:1px solid #6e6e6e;border-bottom:1px solid #6e6e6e"></div>
<div class="t" style="left:222px;top:712px;width:52px;text-align:center;font-weight:bold;font-size:12px">x</div>
<div class="a" style="left:275px;top:707px;width:80px;height:23px;background:#ffffff;border-bottom:1px solid #c8c8c8"></div>
<div class="t" style="left:275px;top:712px;width:78px;text-align:right;font-size:11.5px;letter-spacing:-0.3px">0.333</div>
<div class="a" style="left:222px;top:730px;width:53px;height:23px;background:#f0f0f0;border-right:1px solid #6e6e6e;border-bottom:1px solid #6e6e6e"></div>
<div class="t" style="left:222px;top:735px;width:52px;text-align:center;font-weight:bold;font-size:12px">y</div>
<div class="a" style="left:275px;top:730px;width:80px;height:23px;background:#ffffff;border-bottom:1px solid #c8c8c8"></div>
<div class="t" style="left:275px;top:735px;width:78px;text-align:right;font-size:11.5px;letter-spacing:-0.3px">0.333</div>
<div class="a" style="left:222px;top:753px;width:53px;height:23px;background:#f0f0f0;border-right:1px solid #6e6e6e;border-bottom:1px solid #6e6e6e"></div>
<div class="t" style="left:222px;top:758px;width:52px;text-align:center;font-weight:bold;font-size:12px">z</div>
<div class="a" style="left:275px;top:753px;width:80px;height:23px;background:#ffffff;border-bottom:1px solid #c8c8c8"></div>
<div class="t" style="left:275px;top:758px;width:78px;text-align:right;font-size:11.5px;letter-spacing:-0.3px">0.333</div>
<div class="a" style="left:222px;top:776px;width:53px;height:23px;background:#f0f0f0;border-right:1px solid #6e6e6e;border-bottom:1px solid #6e6e6e"></div>
<div class="t" style="left:222px;top:781px;width:52px;text-align:center;font-weight:bold;font-size:12px">L</div>
<div class="a" style="left:275px;top:776px;width:80px;height:23px;background:#e0e0e0;border-bottom:1px solid #c8c8c8"></div>
<div class="t" style="left:275px;top:781px;width:78px;text-align:right;font-size:11.5px;letter-spacing:-0.3px">0.00</div>
<div class="a" style="left:222px;top:799px;width:53px;height:23px;background:#f0f0f0;border-right:1px solid #6e6e6e;border-bottom:1px solid #6e6e6e"></div>
<div class="t" style="left:222px;top:804px;width:52px;text-align:center;font-weight:bold;font-size:12px">a</div>
<div class="a" style="left:275px;top:799px;width:80px;height:23px;background:#e0e0e0;border-bottom:1px solid #c8c8c8"></div>
<div class="t" style="left:275px;top:804px;width:78px;text-align:right;font-size:11.5px;letter-spacing:-0.3px">0.00</div>
<div class="a" style="left:222px;top:822px;width:53px;height:23px;background:#f0f0f0;border-right:1px solid #6e6e6e;border-bottom:1px solid #6e6e6e"></div>
<div class="t" style="left:222px;top:827px;width:52px;text-align:center;font-weight:bold;font-size:12px">b</div>
<div class="a" style="left:275px;top:822px;width:80px;height:23px;background:#e0e0e0;border-bottom:1px solid #c8c8c8"></div>
<div class="t" style="left:275px;top:827px;width:78px;text-align:right;font-size:11.5px;letter-spacing:-0.3px">0.00</div>
<div class="a" style="left:222px;top:845px;width:53px;height:23px;background:#f0f0f0;border-right:1px solid #6e6e6e;border-bottom:1px solid #6e6e6e"></div>
<div class="t" style="left:222px;top:850px;width:52px;text-align:center;font-weight:bold;font-size:12px">L</div>
<div class="a" style="left:275px;top:845px;width:80px;height:23px;background:#ffffff;border-bottom:1px solid #c8c8c8"></div>
<div class="t" style="left:275px;top:850px;width:78px;text-align:right;font-size:11.5px;letter-spacing:-0.3px">0.00</div>
<div class="a" style="left:222px;top:868px;width:53px;height:23px;background:#f0f0f0;border-right:1px solid #6e6e6e;border-bottom:1px solid #6e6e6e"></div>
<div class="t" style="left:222px;top:873px;width:52px;text-align:center;font-weight:bold;font-size:12px">C</div>
<div class="a" style="left:275px;top:868px;width:80px;height:23px;background:#ffffff;border-bottom:1px solid #c8c8c8"></div>
<div class="t" style="left:275px;top:873px;width:78px;text-align:right;font-size:11.5px;letter-spacing:-0.3px">0.00</div>
<div class="a" style="left:222px;top:891px;width:53px;height:23px;background:#f0f0f0;border-right:1px solid #6e6e6e;border-bottom:1px solid #6e6e6e"></div>
<div class="t" style="left:222px;top:896px;width:52px;text-align:center;font-weight:bold;font-size:12px">H</div>
<div class="a" style="left:275px;top:891px;width:80px;height:23px;background:#ffffff;border-bottom:1px solid #c8c8c8"></div>
<div class="t" style="left:275px;top:896px;width:78px;text-align:right;font-size:11.5px;letter-spacing:-0.3px">32.09</div>
<div class="a" style="left:222px;top:914px;width:53px;height:23px;background:#f0f0f0;border-right:1px solid #6e6e6e;border-bottom:1px solid #6e6e6e"></div>
<div class="t" style="left:222px;top:919px;width:52px;text-align:center;font-weight:bold;font-size:12px">L</div>
<div class="a" style="left:275px;top:914px;width:80px;height:23px;background:#e0e0e0;border-bottom:1px solid #c8c8c8"></div>
<div class="t" style="left:275px;top:919px;width:78px;text-align:right;font-size:11.5px;letter-spacing:-0.3px">0.00</div>
<div class="a" style="left:222px;top:937px;width:53px;height:23px;background:#f0f0f0;border-right:1px solid #6e6e6e;border-bottom:1px solid #6e6e6e"></div>
<div class="t" style="left:222px;top:942px;width:52px;text-align:center;font-weight:bold;font-size:12px">M</div>
<div class="a" style="left:275px;top:937px;width:80px;height:23px;background:#e0e0e0;border-bottom:1px solid #c8c8c8"></div>
<div class="t" style="left:275px;top:942px;width:78px;text-align:right;font-size:11.5px;letter-spacing:-0.3px">0.00</div>
<div class="a" style="left:222px;top:960px;width:53px;height:23px;background:#f0f0f0;border-right:1px solid #6e6e6e;border-bottom:1px solid #6e6e6e"></div>
<div class="t" style="left:222px;top:965px;width:52px;text-align:center;font-weight:bold;font-size:12px">S</div>
<div class="a" style="left:275px;top:960px;width:80px;height:23px;background:#e0e0e0;border-bottom:1px solid #c8c8c8"></div>
<div class="t" style="left:275px;top:965px;width:78px;text-align:right;font-size:11.5px;letter-spacing:-0.3px">0.00</div>
<div class="a" style="left:355px;top:430px;width:18px;height:577px;background:#f0f0f0"></div>
<svg class="a" style="left:359px;top:437px" width="10" height="8"><path d="M0 7 L5 1 L10 7z" fill="#a8a8a8"/></svg>
<svg class="a" style="left:359px;top:995px" width="10" height="8"><path d="M0 1 L5 7 L10 1z" fill="#a8a8a8"/></svg>
<div class="a" style="left:390px;top:386px;width:1508px;height:630px;background:#ebebeb;border:2px solid #9d9d9d;border-top-left-radius:6px;border-top-right-radius:6px;border-right-color:#a8a8a8"></div><div class="a" style="left:392px;top:388px;width:1504px;height:18px;background:linear-gradient(90deg,#e2eaf5,#edf2f9);border-bottom:1px solid #a9a9a9;border-top-left-radius:5px;border-top-right-radius:5px"></div><div class="t" style="left:399px;top:389px;font-weight:bold;color:#4a4a4a;font-size:13.5px;letter-spacing:0.1px">Information</div>
<div class="a" style="left:396px;top:409px;width:302px;height:23px;background:#e8e8e8;border:1px solid #a0a0a0;border-top:2px solid #808080;border-left:2px solid #808080"></div>
<div class="a" style="left:399px;top:412px;width:281px;height:17px;background:#0078d7"></div>
<div class="t" style="left:400px;top:412px;font-size:13.5px;color:#fff">CIE Diagram</div>
<div class="a" style="left:680px;top:412px;width:16px;height:18px;background:#f0f0f0;border-right:1px solid #888;border-bottom:1px solid #888"></div>
<svg class="a" style="left:683px;top:418px" width="10" height="6"><path d="M0.5 0.5 h8 l-4 4z" fill="#000"/></svg>
<div class="a" style="left:398px;top:439px;width:497px;height:3px;background:#8a8a8a"></div>
<div class="a" style="left:398px;top:439px;width:1497px;height:569px;background:#fff;border-top:3px solid #8a8a8a;border-left:3px solid #8a8a8a;border-right:2px solid #fff"></div>
<svg class="a" style="left:401px;top:442px" width="1489" height="563" viewBox="401 442 1489 563"><defs><linearGradient id="fbh" x1="0" y1="0" x2="0.3" y2="1"><stop offset="0" stop-color="#00c070"/><stop offset="0.5" stop-color="#00c0a8"/><stop offset="0.8" stop-color="#0090c8"/><stop offset="1" stop-color="#3000d0"/></linearGradient><linearGradient id="fbr" x1="0" y1="0" x2="1" y2="0"><stop offset="0" stop-color="#00b040" stop-opacity="0"/><stop offset="0.3" stop-color="#40b000" stop-opacity="0"/><stop offset="0.5" stop-color="#90b000" stop-opacity="0.9"/><stop offset="0.75" stop-color="#d06000"/><stop offset="1" stop-color="#c00040"/></linearGradient><linearGradient id="fbb" x1="0" y1="0" x2="0" y2="1"><stop offset="0.7" stop-color="#8000c0" stop-opacity="0"/><stop offset="0.9" stop-color="#9000c0" stop-opacity="0.8"/></linearGradient><linearGradient id="fbt" x1="0" y1="0" x2="1" y2="0.5"><stop offset="0" stop-color="#20ff60"/><stop offset="0.45" stop-color="#ffff80"/><stop offset="1" stop-color="#ff0040"/></linearGradient><radialGradient id="fbw" cx="0.35" cy="0.62" r="0.3"><stop offset="0" stop-color="#fff"/><stop offset="1" stop-color="#fff" stop-opacity="0"/></radialGradient></defs><rect x="401" y="442" width="1489" height="563" fill="#02080b"/><polygon points="790.6,968 782.5,967.3 769,962.6 755.4,955.8 731,940.9 705.3,920.2 691.8,909.1 660.6,880 651.3,870 645.4,864.2 598.8,808.8 587.8,791.3 563.7,752.6 552.8,730 540.6,695.5 533.9,667.7 532.5,639.3 532.3,610 532.3,595 534.5,583.6 539.3,566.7 548,545.7 567.7,527.4 586.7,518.6 621.9,508.4 657,504.4 680,503.6 700,504.8 726.9,508.1 773.8,516.6 826.3,527.8 856.3,535 927.5,555 980,570 1017.5,583.1 1040,591.3 1152.5,627.8 1186.3,639.6 1250,662.5 1351.3,695.3 1400,714 1518.7,752.4 1633.8,794.4 1720.4,821.5" fill="url(#fbh)"/><polygon points="790.6,968 782.5,967.3 769,962.6 755.4,955.8 731,940.9 705.3,920.2 691.8,909.1 660.6,880 651.3,870 645.4,864.2 598.8,808.8 587.8,791.3 563.7,752.6 552.8,730 540.6,695.5 533.9,667.7 532.5,639.3 532.3,610 532.3,595 534.5,583.6 539.3,566.7 548,545.7 567.7,527.4 586.7,518.6 621.9,508.4 657,504.4 680,503.6 700,504.8 726.9,508.1 773.8,516.6 826.3,527.8 856.3,535 927.5,555 980,570 1017.5,583.1 1040,591.3 1152.5,627.8 1186.3,639.6 1250,662.5 1351.3,695.3 1400,714 1518.7,752.4 1633.8,794.4 1720.4,821.5" fill="url(#fbr)"/><polygon points="790.6,968 782.5,967.3 769,962.6 755.4,955.8 731,940.9 705.3,920.2 691.8,909.1 660.6,880 651.3,870 645.4,864.2 598.8,808.8 587.8,791.3 563.7,752.6 552.8,730 540.6,695.5 533.9,667.7 532.5,639.3 532.3,610 532.3,595 534.5,583.6 539.3,566.7 548,545.7 567.7,527.4 586.7,518.6 621.9,508.4 657,504.4 680,503.6 700,504.8 726.9,508.1 773.8,516.6 826.3,527.8 856.3,535 927.5,555 980,570 1017.5,583.1 1040,591.3 1152.5,627.8 1186.3,639.6 1250,662.5 1351.3,695.3 1400,714 1518.7,752.4 1633.8,794.4 1720.4,821.5" fill="url(#fbb)"/><polygon points="942.2,581.5 1663.2,803.6 779.0,945.5" fill="url(#fbt)"/><polygon points="942.2,581.5 1663.2,803.6 779.0,945.5" fill="url(#fbw)"/></svg>
<canvas id="cie" class="a" style="left:401px;top:442px" width="1489" height="563"></canvas>
<script>
(function(){
var W=1489,H=563,X0=125.500000,SX=1653,Y0=534.300000,SY=561.1,K=0.77,SI=1.15;
var L=[[389.6, 526], [381.5, 525.3], [368, 520.6], [354.4, 513.8], [330, 498.9], [304.3, 478.2], [290.8, 467.1], [259.6, 438], [250.3, 428], [244.4, 422.2], [197.8, 366.8], [186.8, 349.3], [162.7, 310.6], [151.8, 288], [139.6, 253.5], [132.9, 225.7], [131.5, 197.3], [131.3, 168], [131.3, 153], [133.5, 141.6], [138.3, 124.7], [147, 103.7], [166.7, 85.4], [185.7, 76.6], [220.9, 66.4], [256, 62.4], [279, 61.6], [299, 62.8], [325.9, 66.1], [372.8, 74.6], [425.3, 85.8], [455.3, 93], [526.5, 113], [579, 128], [616.5, 141.1], [639, 149.3], [751.5, 185.8], [785.3, 197.6], [849, 220.5], [950.3, 253.3], [999, 272], [1117.7, 310.4], [1232.8, 352.4], [1319.4, 379.5]], T=[[541.2, 139.5], [1262.2, 361.6], [378.0, 503.5]];
var cv=document.getElementById('cie'),g=cv.getContext('2d');
function mask(pts){var c=document.createElement('canvas');c.width=W;c.height=H;var q=c.getContext('2d');q.beginPath();q.moveTo(pts[0][0],pts[0][1]);for(var i=1;i<pts.length;i++)q.lineTo(pts[i][0],pts[i][1]);q.closePath();q.fillStyle='#fff';q.fill();return q.getImageData(0,0,W,H).data;}
var ma=mask(L), ta=mask(T);
var out=g.createImageData(W,H), inn=g.createImageData(W,H), od=out.data, id=inn.data;
var bg=[2,8,11];
var gm=1/2.2;
for(var y=0;y<H;y++){for(var x=0;x<W;x++){var i=(y*W+x)*4;
 var a=ma[i+3]/255;
 if(a<=0){od[i]=bg[0];od[i+1]=bg[1];od[i+2]=bg[2];od[i+3]=255;continue;}
 var cx=(x+0.5-X0)/SX, cy=(Y0-(y+0.5))/SY; if(cy<0.004)cy=0.004;
 var X=cx/cy, Z=(1-cx-cy)/cy;
 var r=3.2406*X-1.5372-0.4986*Z, gg=-0.9689*X+1.8758+0.0415*Z, b=0.0557*X-0.2040+1.0570*Z;
 var mn=Math.min(r,gg,b); if(mn<0){r-=mn;gg-=mn;b-=mn;} var m=Math.max(r,gg,b); r/=m; gg/=m; b/=m;
 r=Math.pow(r,gm)*255; gg=Math.pow(gg,gm)*255; b=Math.pow(b,gm)*255;
 od[i]=r*K*a+bg[0]*(1-a); od[i+1]=gg*K*a+bg[1]*(1-a); od[i+2]=b*K*a+bg[2]*(1-a); od[i+3]=255;
 var t=ta[i+3]; if(t>0){id[i]=Math.min(255,r*SI);id[i+1]=Math.min(255,gg*SI);id[i+2]=Math.min(255,b*SI);id[i+3]=t;}
}}
g.putImageData(out,0,0);
g.strokeStyle='#4a4a4a'; g.lineWidth=1; g.beginPath();
for(var k=0;k<=7;k++){var px=Math.floor(X0+SX*k/10)+0.5; g.moveTo(px,0); g.lineTo(px,H);}
for(var k=1;k<=9;k++){var py=Math.round(Y0-SY*k/10)+0.5; g.moveTo(0,py); g.lineTo(W,py);}
g.stroke();
// locus outline
g.strokeStyle='#f0b000'; g.lineWidth=1.7; g.beginPath(); g.moveTo(L[0][0],L[0][1]); for(var j=1;j<L.length;j++) g.lineTo(L[j][0],L[j][1]); g.closePath(); g.stroke();
var tc=document.createElement('canvas'); tc.width=W; tc.height=H; tc.getContext('2d').putImageData(inn,0,0); g.drawImage(tc,0,0);
})();
</script>
<svg class="a" style="left:401px;top:442px" width="1489" height="563" viewBox="401 442 1489 563"><defs><radialGradient id="pt" cx="0.38" cy="0.32" r="0.7"><stop offset="0" stop-color="#fff" stop-opacity="0.35"/><stop offset="0.35" stop-color="#fff" stop-opacity="0"/><stop offset="0.8" stop-color="#000" stop-opacity="0"/><stop offset="1" stop-color="#000" stop-opacity="0.3"/></radialGradient><filter id="sh" x="-50%" y="-50%" width="200%" height="200%"><feGaussianBlur in="SourceAlpha" stdDeviation="1.2"/><feOffset dx="1.5" dy="2"/><feComponentTransfer><feFuncA type="linear" slope="0.6"/></feComponentTransfer><feMerge><feMergeNode/><feMergeNode in="SourceGraphic"/></feMerge></filter></defs><path d="M401 791.5 H1890 M1043.5 442 V1005" stroke="#c8c8c8" stroke-width="1" stroke-dasharray="4 4" fill="none"/><linearGradient id="gb" gradientUnits="userSpaceOnUse" x1="962.4" y1="588.5" x2="774.4" y2="943.0"><stop offset="0" stop-color="#006000"/><stop offset="0.45" stop-color="#207890"/><stop offset="1" stop-color="#000080"/></linearGradient><linearGradient id="br" gradientUnits="userSpaceOnUse" x1="774.4" y1="943.0" x2="1648.3" y2="796.9"><stop offset="0" stop-color="#000070"/><stop offset="0.35" stop-color="#600060"/><stop offset="1" stop-color="#880000"/></linearGradient><linearGradient id="rg" gradientUnits="userSpaceOnUse" x1="1648.3" y1="796.9" x2="962.4" y2="588.5"><stop offset="0" stop-color="#804000"/><stop offset="0.5" stop-color="#6a7000"/><stop offset="1" stop-color="#006000"/></linearGradient><line x1="962.4" y1="588.5" x2="774.4" y2="943.0" stroke="url(#gb)" stroke-width="3"/><line x1="774.4" y1="943.0" x2="1648.3" y2="796.9" stroke="url(#br)" stroke-width="3"/><line x1="1648.3" y1="796.9" x2="962.4" y2="588.5" stroke="url(#rg)" stroke-width="2.5"/><path d="M942.2 581.5 L1663.2 803.6 L779.0 945.5 Z" fill="none" stroke="#fff" stroke-width="3.2" stroke-linejoin="miter"/><line x1="1042.2" y1="792.1" x2="942.2" y2="581.5" stroke="#333" stroke-width="1" stroke-dasharray="3 3"/><line x1="1042.2" y1="792.1" x2="1663.2" y2="803.6" stroke="#333" stroke-width="1" stroke-dasharray="3 3"/><line x1="1042.2" y1="792.1" x2="779.0" y2="945.5" stroke="#333" stroke-width="1" stroke-dasharray="3 3"/><line x1="1042.2" y1="792.1" x2="1247.4" y2="675.2" stroke="#333" stroke-width="1" stroke-dasharray="3 3"/><line x1="1042.2" y1="792.1" x2="852" y2="791" stroke="#333" stroke-width="1" stroke-dasharray="3 3"/><line x1="1042.2" y1="792.1" x2="1090" y2="895" stroke="#333" stroke-width="1" stroke-dasharray="3 3"/><path d="M937 839.6 L960 829 L998.8 810.7 L1042 792 L1078.5 781.5 L1093 778.5 L1172.3 759.9 L1251 745.9 L1265 745 L1289.8 743.4" fill="none" stroke="#000" stroke-width="1.2"/><circle cx="998.8" cy="810.7" r="3" fill="#fff" stroke="#000" stroke-width="1"/><circle cx="1078.5" cy="781.5" r="3" fill="#fff" stroke="#000" stroke-width="1"/><circle cx="1251" cy="745.9" r="3" fill="#fff" stroke="#000" stroke-width="1"/><circle cx="1265.6" cy="746.9" r="3" fill="#10d010"/><rect x="1097.1" y="773.3" width="11" height="11" fill="none" stroke="#e0a030" stroke-width="2.4"/><rect x="1097.1" y="773.3" width="11" height="11" fill="none" stroke="#405038" stroke-width="0.9"/><rect x="1112.1" y="770.7" width="11" height="11" fill="none" stroke="#e0a030" stroke-width="2.4"/><rect x="1112.1" y="770.7" width="11" height="11" fill="none" stroke="#405038" stroke-width="0.9"/><rect x="1123.8" y="765.2" width="11" height="11" fill="none" stroke="#e0a030" stroke-width="2.4"/><rect x="1123.8" y="765.2" width="11" height="11" fill="none" stroke="#405038" stroke-width="0.9"/><rect x="1136.8" y="757.9" width="11" height="11" fill="none" stroke="#e0a030" stroke-width="2.4"/><rect x="1136.8" y="757.9" width="11" height="11" fill="none" stroke="#405038" stroke-width="0.9"/><rect x="1148.5" y="766.8" width="11" height="11" fill="none" stroke="#e0a030" stroke-width="2.4"/><rect x="1148.5" y="766.8" width="11" height="11" fill="none" stroke="#405038" stroke-width="0.9"/><rect x="1160.3" y="758.3" width="11" height="11" fill="none" stroke="#e0a030" stroke-width="2.4"/><rect x="1160.3" y="758.3" width="11" height="11" fill="none" stroke="#405038" stroke-width="0.9"/><rect x="1131.0" y="783.1" width="11" height="11" fill="none" stroke="#e0a030" stroke-width="2.4"/><rect x="1131.0" y="783.1" width="11" height="11" fill="none" stroke="#405038" stroke-width="0.9"/><rect x="1173.9" y="766.8" width="11" height="11" fill="none" stroke="#e0a030" stroke-width="2.4"/><rect x="1173.9" y="766.8" width="11" height="11" fill="none" stroke="#405038" stroke-width="0.9"/><rect x="1177.8" y="778.5" width="11" height="11" fill="none" stroke="#e0a030" stroke-width="2.4"/><rect x="1177.8" y="778.5" width="11" height="11" fill="none" stroke="#405038" stroke-width="0.9"/><rect x="1203.9" y="771.7" width="11" height="11" fill="none" stroke="#e0a030" stroke-width="2.4"/><rect x="1203.9" y="771.7" width="11" height="11" fill="none" stroke="#405038" stroke-width="0.9"/><rect x="1203.9" y="781.1" width="11" height="11" fill="none" stroke="#e0a030" stroke-width="2.4"/><rect x="1203.9" y="781.1" width="11" height="11" fill="none" stroke="#405038" stroke-width="0.9"/><rect x="1222.8" y="756.4" width="11" height="11" fill="none" stroke="#e0a030" stroke-width="2.4"/><rect x="1222.8" y="756.4" width="11" height="11" fill="none" stroke="#405038" stroke-width="0.9"/><rect x="1224.1" y="761.6" width="11" height="11" fill="none" stroke="#e0a030" stroke-width="2.4"/><rect x="1224.1" y="761.6" width="11" height="11" fill="none" stroke="#405038" stroke-width="0.9"/><rect x="1244.9" y="755.1" width="11" height="11" fill="none" stroke="#e0a030" stroke-width="2.4"/><rect x="1244.9" y="755.1" width="11" height="11" fill="none" stroke="#405038" stroke-width="0.9"/><rect x="1253.1" y="776.9" width="11" height="11" fill="none" stroke="#e0a030" stroke-width="2.4"/><rect x="1253.1" y="776.9" width="11" height="11" fill="none" stroke="#405038" stroke-width="0.9"/><rect x="1271.6" y="772.0" width="11" height="11" fill="none" stroke="#e0a030" stroke-width="2.4"/><rect x="1271.6" y="772.0" width="11" height="11" fill="none" stroke="#405038" stroke-width="0.9"/><rect x="1276.1" y="762.9" width="11" height="11" fill="none" stroke="#e0a030" stroke-width="2.4"/><rect x="1276.1" y="762.9" width="11" height="11" fill="none" stroke="#405038" stroke-width="0.9"/><rect x="1290.9" y="739.2" width="11" height="11" fill="none" stroke="#e0a030" stroke-width="2.4"/><rect x="1290.9" y="739.2" width="11" height="11" fill="none" stroke="#405038" stroke-width="0.9"/><rect x="1305.2" y="760.0" width="11" height="11" fill="none" stroke="#e0a030" stroke-width="2.4"/><rect x="1305.2" y="760.0" width="11" height="11" fill="none" stroke="#405038" stroke-width="0.9"/><rect x="1323.4" y="747.3" width="11" height="11" fill="none" stroke="#e0a030" stroke-width="2.4"/><rect x="1323.4" y="747.3" width="11" height="11" fill="none" stroke="#405038" stroke-width="0.9"/><rect x="1084.5" y="788.5" width="11" height="11" fill="none" stroke="#e0a030" stroke-width="2.4"/><rect x="1084.5" y="788.5" width="11" height="11" fill="none" stroke="#405038" stroke-width="0.9"/><rect x="1111.5" y="768.5" width="11" height="11" fill="none" stroke="#e0a030" stroke-width="2.4"/><rect x="1111.5" y="768.5" width="11" height="11" fill="none" stroke="#405038" stroke-width="0.9"/><rect x="955.4" y="581.5" width="14" height="14" fill="#40d040"/><path d="M956.15 595.5 V582.25 H969.4" fill="none" stroke="#1a1a80" stroke-width="1.5"/><path d="M968.65 581.5 V594.75 H955.4" fill="none" stroke="#e01030" stroke-width="1.5"/><rect x="958.4" y="584.5" width="8" height="8" fill="none" stroke="#fff" stroke-opacity="0.35" stroke-width="1"/><text x="962.4" y="592.5" font-size="11" text-anchor="middle" font-family="Liberation Sans" font-weight="bold" fill="#000">+</text><rect x="980.6" y="632.4" width="14" height="14" fill="#50e050"/><path d="M981.35 646.4 V633.15 H994.6" fill="none" stroke="#1a1a80" stroke-width="1.5"/><path d="M993.85 632.4 V645.65 H980.6" fill="none" stroke="#e01030" stroke-width="1.5"/><rect x="983.6" y="635.4" width="8" height="8" fill="none" stroke="#fff" stroke-opacity="0.35" stroke-width="1"/><rect x="992.4" y="681.5" width="14" height="14" fill="#50e050"/><path d="M993.15 695.5 V682.25 H1006.4" fill="none" stroke="#1a1a80" stroke-width="1.5"/><path d="M1005.65 681.5 V694.75 H992.4" fill="none" stroke="#e01030" stroke-width="1.5"/><rect x="995.4" y="684.5" width="8" height="8" fill="none" stroke="#fff" stroke-opacity="0.35" stroke-width="1"/><rect x="1020.4000000000001" y="733.4" width="14" height="14" fill="#50e050"/><path d="M1021.1500000000001 747.4 V734.15 H1034.4" fill="none" stroke="#1a1a80" stroke-width="1.5"/><path d="M1033.65 733.4 V746.65 H1020.4000000000001" fill="none" stroke="#e01030" stroke-width="1.5"/><rect x="1023.4000000000001" y="736.4" width="8" height="8" fill="none" stroke="#fff" stroke-opacity="0.35" stroke-width="1"/><g filter="url(#sh)"><circle cx="975.6" cy="641.9" r="6.5" fill="#10d010" stroke="#202020" stroke-width="1"/><circle cx="975.6" cy="641.9" r="6.5" fill="url(#pt)"/></g><rect x="974.8000000000001" y="641.1" width="1.6" height="1.8" fill="#000030"/><g filter="url(#sh)"><circle cx="990.7" cy="693.7" r="6.5" fill="#10d010" stroke="#202020" stroke-width="1"/><circle cx="990.7" cy="693.7" r="6.5" fill="url(#pt)"/></g><rect x="989.9000000000001" y="692.9000000000001" width="1.6" height="1.8" fill="#000030"/><g filter="url(#sh)"><circle cx="1024.4" cy="741.5" r="6.5" fill="#10d010" stroke="#202020" stroke-width="1"/><circle cx="1024.4" cy="741.5" r="6.5" fill="url(#pt)"/></g><rect x="1023.6000000000001" y="740.7" width="1.6" height="1.8" fill="#000030"/><g filter="url(#sh)"><circle cx="942.2" cy="581.5" r="6.5" fill="#10d010" stroke="#202020" stroke-width="1"/><circle cx="942.2" cy="581.5" r="6.5" fill="url(#pt)"/></g><rect x="1240.4" y="668.2" width="14" height="14" fill="#e8d000"/><path d="M1241.15 682.2 V668.95 H1254.4" fill="none" stroke="#1a1a80" stroke-width="1.5"/><path d="M1253.65 668.2 V681.45 H1240.4" fill="none" stroke="#e01030" stroke-width="1.5"/><rect x="1243.4" y="671.2" width="8" height="8" fill="none" stroke="#fff" stroke-opacity="0.35" stroke-width="1"/><g filter="url(#sh)"><circle cx="1247.4" cy="675.2" r="6" fill="#e8e890" stroke="#202020" stroke-width="1"/><circle cx="1247.4" cy="675.2" r="6" fill="url(#pt)"/></g><rect x="1246.6000000000001" y="674.4000000000001" width="1.6" height="1.8" fill="#000030"/><rect x="1197.5" y="699.5" width="14" height="14" fill="#e8d000"/><path d="M1198.25 713.5 V700.25 H1211.5" fill="none" stroke="#1a1a80" stroke-width="1.5"/><path d="M1210.75 699.5 V712.75 H1197.5" fill="none" stroke="#e01030" stroke-width="1.5"/><rect x="1200.5" y="702.5" width="8" height="8" fill="none" stroke="#fff" stroke-opacity="0.35" stroke-width="1"/><g filter="url(#sh)"><circle cx="1204.5" cy="706.5" r="6" fill="#e8e890" stroke="#202020" stroke-width="1"/><circle cx="1204.5" cy="706.5" r="6" fill="url(#pt)"/></g><rect x="1203.7" y="705.7" width="1.6" height="1.8" fill="#000030"/><rect x="1141.3" y="728.4" width="14" height="14" fill="#e8d000"/><path d="M1142.05 742.4 V729.15 H1155.3" fill="none" stroke="#1a1a80" stroke-width="1.5"/><path d="M1154.55 728.4 V741.65 H1141.3" fill="none" stroke="#e01030" stroke-width="1.5"/><rect x="1144.3" y="731.4" width="8" height="8" fill="none" stroke="#fff" stroke-opacity="0.35" stroke-width="1"/><g filter="url(#sh)"><circle cx="1148.3" cy="735.4" r="6" fill="#e8e890" stroke="#202020" stroke-width="1"/><circle cx="1148.3" cy="735.4" r="6" fill="url(#pt)"/></g><rect x="1147.5" y="734.6" width="1.6" height="1.8" fill="#000030"/><rect x="1082.2" y="754.5" width="14" height="14" fill="#e8d000"/><path d="M1082.95 768.5 V755.25 H1096.2" fill="none" stroke="#1a1a80" stroke-width="1.5"/><path d="M1095.45 754.5 V767.75 H1082.2" fill="none" stroke="#e01030" stroke-width="1.5"/><rect x="1085.2" y="757.5" width="8" height="8" fill="none" stroke="#fff" stroke-opacity="0.35" stroke-width="1"/><g filter="url(#sh)"><circle cx="1089.2" cy="761.5" r="6" fill="#e8e890" stroke="#202020" stroke-width="1"/><circle cx="1089.2" cy="761.5" r="6" fill="url(#pt)"/></g><rect x="1088.4" y="760.7" width="1.6" height="1.8" fill="#000030"/><g filter="url(#sh)"><circle cx="1076.3" cy="789.6" r="5" fill="#e0e000" stroke="#202020" stroke-width="1"/><circle cx="1076.3" cy="789.6" r="5" fill="url(#pt)"/></g><rect x="848.6" y="783.6" width="14" height="14" fill="#40e0e0"/><path d="M849.35 797.6 V784.35 H862.6" fill="none" stroke="#1a1a80" stroke-width="1.5"/><path d="M861.85 783.6 V796.85 H848.6" fill="none" stroke="#e01030" stroke-width="1.5"/><rect x="851.6" y="786.6" width="8" height="8" fill="none" stroke="#fff" stroke-opacity="0.35" stroke-width="1"/><rect x="892.6" y="784.1" width="14" height="14" fill="#40e0e0"/><path d="M893.35 798.1 V784.85 H906.6" fill="none" stroke="#1a1a80" stroke-width="1.5"/><path d="M905.85 784.1 V797.35 H892.6" fill="none" stroke="#e01030" stroke-width="1.5"/><rect x="895.6" y="787.1" width="8" height="8" fill="none" stroke="#fff" stroke-opacity="0.35" stroke-width="1"/><rect x="947.0" y="782.0" width="14" height="14" fill="#40e0e0"/><path d="M947.75 796.0 V782.75 H961.0" fill="none" stroke="#1a1a80" stroke-width="1.5"/><path d="M960.25 782.0 V795.25 H947.0" fill="none" stroke="#e01030" stroke-width="1.5"/><rect x="950.0" y="785.0" width="8" height="8" fill="none" stroke="#fff" stroke-opacity="0.35" stroke-width="1"/><rect x="984.1" y="783.4" width="14" height="14" fill="#40e0e0"/><path d="M984.85 797.4 V784.15 H998.1" fill="none" stroke="#1a1a80" stroke-width="1.5"/><path d="M997.35 783.4 V796.65 H984.1" fill="none" stroke="#e01030" stroke-width="1.5"/><rect x="987.1" y="786.4" width="8" height="8" fill="none" stroke="#fff" stroke-opacity="0.35" stroke-width="1"/><g filter="url(#sh)"><circle cx="851.5" cy="791.1" r="6.5" fill="#90d8d8" stroke="#202020" stroke-width="1"/><circle cx="851.5" cy="791.1" r="6.5" fill="url(#pt)"/></g><rect x="850.7" y="790.3000000000001" width="1.6" height="1.8" fill="#800000"/><g filter="url(#sh)"><circle cx="900.6" cy="792.4" r="6.5" fill="#90d8d8" stroke="#202020" stroke-width="1"/><circle cx="900.6" cy="792.4" r="6.5" fill="url(#pt)"/></g><rect x="899.8000000000001" y="791.6" width="1.6" height="1.8" fill="#800000"/><g filter="url(#sh)"><circle cx="954.8" cy="788.7" r="6.5" fill="#90d8d8" stroke="#202020" stroke-width="1"/><circle cx="954.8" cy="788.7" r="6.5" fill="url(#pt)"/></g><rect x="954.0" y="787.9000000000001" width="1.6" height="1.8" fill="#800000"/><g filter="url(#sh)"><circle cx="997.8" cy="789.9" r="6.5" fill="#90d8d8" stroke="#202020" stroke-width="1"/><circle cx="997.8" cy="789.9" r="6.5" fill="url(#pt)"/></g><rect x="997.0" y="789.1" width="1.6" height="1.8" fill="#800000"/><rect x="967.3" y="821.1" width="14" height="14" fill="#6040ff"/><path d="M968.05 835.1 V821.85 H981.3" fill="none" stroke="#3020e0" stroke-width="1.5"/><path d="M980.55 821.1 V834.35 H967.3" fill="none" stroke="#e01030" stroke-width="1.5"/><rect x="970.3" y="824.1" width="8" height="8" fill="none" stroke="#fff" stroke-opacity="0.35" stroke-width="1"/><rect x="903.2" y="862.3" width="14" height="14" fill="#6040ff"/><path d="M903.95 876.3 V863.05 H917.2" fill="none" stroke="#3020e0" stroke-width="1.5"/><path d="M916.45 862.3 V875.55 H903.2" fill="none" stroke="#e01030" stroke-width="1.5"/><rect x="906.2" y="865.3" width="8" height="8" fill="none" stroke="#fff" stroke-opacity="0.35" stroke-width="1"/><rect x="831.1" y="899.3" width="14" height="14" fill="#6040ff"/><path d="M831.85 913.3 V900.05 H845.1" fill="none" stroke="#3020e0" stroke-width="1.5"/><path d="M844.35 899.3 V912.55 H831.1" fill="none" stroke="#e01030" stroke-width="1.5"/><rect x="834.1" y="902.3" width="8" height="8" fill="none" stroke="#fff" stroke-opacity="0.35" stroke-width="1"/><rect x="767.4" y="936.0" width="14" height="14" fill="#6040ff"/><path d="M768.15 950.0 V936.75 H781.4" fill="none" stroke="#3020e0" stroke-width="1.5"/><path d="M780.65 936.0 V949.25 H767.4" fill="none" stroke="#e01030" stroke-width="1.5"/><rect x="770.4" y="939.0" width="8" height="8" fill="none" stroke="#fff" stroke-opacity="0.35" stroke-width="1"/><g filter="url(#sh)"><circle cx="983.9" cy="827" r="6.5" fill="#2030f0" stroke="#202020" stroke-width="1"/><circle cx="983.9" cy="827" r="6.5" fill="url(#pt)"/></g><g filter="url(#sh)"><circle cx="914.4" cy="869.3" r="6.5" fill="#2030f0" stroke="#202020" stroke-width="1"/><circle cx="914.4" cy="869.3" r="6.5" fill="url(#pt)"/></g><g filter="url(#sh)"><circle cx="847.8" cy="902.6" r="6.5" fill="#2030f0" stroke="#202020" stroke-width="1"/><circle cx="847.8" cy="902.6" r="6.5" fill="url(#pt)"/></g><g filter="url(#sh)"><circle cx="778.3" cy="944.8" r="6.5" fill="#2030f0" stroke="#202020" stroke-width="1"/><circle cx="778.3" cy="944.8" r="6.5" fill="url(#pt)"/></g><rect x="1040.4" y="812.3" width="14" height="14" fill="#f040f0"/><path d="M1041.15 826.3 V813.05 H1054.4" fill="none" stroke="#e020e0" stroke-width="1.5"/><path d="M1053.65 812.3 V825.55 H1040.4" fill="none" stroke="#e01030" stroke-width="1.5"/><rect x="1043.4" y="815.3" width="8" height="8" fill="none" stroke="#fff" stroke-opacity="0.35" stroke-width="1"/><rect x="1058.2" y="833.0" width="14" height="14" fill="#f040f0"/><path d="M1058.95 847.0 V833.75 H1072.2" fill="none" stroke="#e020e0" stroke-width="1.5"/><path d="M1071.45 833.0 V846.25 H1058.2" fill="none" stroke="#e01030" stroke-width="1.5"/><rect x="1061.2" y="836.0" width="8" height="8" fill="none" stroke="#fff" stroke-opacity="0.35" stroke-width="1"/><rect x="1069.3" y="858.9" width="14" height="14" fill="#f040f0"/><path d="M1070.05 872.9 V859.65 H1083.3" fill="none" stroke="#e020e0" stroke-width="1.5"/><path d="M1082.55 858.9 V872.15 H1069.3" fill="none" stroke="#e01030" stroke-width="1.5"/><rect x="1072.3" y="861.9" width="8" height="8" fill="none" stroke="#fff" stroke-opacity="0.35" stroke-width="1"/><rect x="1069.0" y="885.0" width="14" height="14" fill="#f040f0"/><path d="M1069.75 899.0 V885.75 H1083.0" fill="none" stroke="#e020e0" stroke-width="1.5"/><path d="M1082.25 885.0 V898.25 H1069.0" fill="none" stroke="#e01030" stroke-width="1.5"/><rect x="1072.0" y="888.0" width="8" height="8" fill="none" stroke="#fff" stroke-opacity="0.35" stroke-width="1"/><g filter="url(#sh)"><circle cx="1049.6" cy="817.8" r="6.5" fill="#e010e0" stroke="#202020" stroke-width="1"/><circle cx="1049.6" cy="817.8" r="6.5" fill="url(#pt)"/></g><rect x="1048.8" y="817.0" width="1.6" height="1.8" fill="#000030"/><g filter="url(#sh)"><circle cx="1069.6" cy="837" r="6.5" fill="#e010e0" stroke="#202020" stroke-width="1"/><circle cx="1069.6" cy="837" r="6.5" fill="url(#pt)"/></g><rect x="1068.8" y="836.2" width="1.6" height="1.8" fill="#000030"/><g filter="url(#sh)"><circle cx="1090" cy="863" r="6.5" fill="#e010e0" stroke="#202020" stroke-width="1"/><circle cx="1090" cy="863" r="6.5" fill="url(#pt)"/></g><rect x="1089.2" y="862.2" width="1.6" height="1.8" fill="#000030"/><g filter="url(#sh)"><circle cx="1090" cy="895" r="6.5" fill="#e010e0" stroke="#202020" stroke-width="1"/><circle cx="1090" cy="895" r="6.5" fill="url(#pt)"/></g><rect x="1089.2" y="894.2" width="1.6" height="1.8" fill="#000030"/><rect x="1345.2" y="788.0" width="14" height="14" fill="#e01010"/><path d="M1345.95 802.0 V788.75 H1359.2" fill="none" stroke="#1a1a80" stroke-width="1.5"/><path d="M1358.45 788.0 V801.25 H1345.2" fill="none" stroke="#e01030" stroke-width="1.5"/><rect x="1348.2" y="791.0" width="8" height="8" fill="none" stroke="#fff" stroke-opacity="0.35" stroke-width="1"/><rect x="1492.4" y="788.7" width="14" height="14" fill="#e01010"/><path d="M1493.15 802.7 V789.45 H1506.4" fill="none" stroke="#1a1a80" stroke-width="1.5"/><path d="M1505.65 788.7 V801.95 H1492.4" fill="none" stroke="#e01030" stroke-width="1.5"/><rect x="1495.4" y="791.7" width="8" height="8" fill="none" stroke="#fff" stroke-opacity="0.35" stroke-width="1"/><rect x="1184.8" y="783.5" width="14" height="14" fill="#e01010"/><path d="M1185.55 797.5 V784.25 H1198.8" fill="none" stroke="#1a1a80" stroke-width="1.5"/><path d="M1198.05 783.5 V796.75 H1184.8" fill="none" stroke="#e01030" stroke-width="1.5"/><rect x="1187.8" y="786.5" width="8" height="8" fill="none" stroke="#fff" stroke-opacity="0.35" stroke-width="1"/><rect x="1641.3" y="789.9" width="14" height="14" fill="#e01010"/><path d="M1642.05 803.9 V790.65 H1655.3" fill="none" stroke="#1a1a80" stroke-width="1.5"/><path d="M1654.55 789.9 V803.15 H1641.3" fill="none" stroke="#e01030" stroke-width="1.5"/><rect x="1644.3" y="792.9" width="8" height="8" fill="none" stroke="#fff" stroke-opacity="0.35" stroke-width="1"/><text x="1648.3" y="801" font-size="11" text-anchor="middle" font-family="Liberation Sans" font-weight="bold" fill="#fff">+</text><g filter="url(#sh)"><circle cx="1350.1" cy="795" r="6.5" fill="#e02010" stroke="#202020" stroke-width="1"/><circle cx="1350.1" cy="795" r="6.5" fill="url(#pt)"/></g><g filter="url(#sh)"><circle cx="1498" cy="799.5" r="6.5" fill="#e02010" stroke="#202020" stroke-width="1"/><circle cx="1498" cy="799.5" r="6.5" fill="url(#pt)"/></g><g filter="url(#sh)"><circle cx="1188" cy="788" r="6.5" fill="#e02010" stroke="#202020" stroke-width="1"/><circle cx="1188" cy="788" r="6.5" fill="url(#pt)"/></g><g filter="url(#sh)"><circle cx="1663.2" cy="803.6" r="6.5" fill="#e02010" stroke="#202020" stroke-width="1"/><circle cx="1663.2" cy="803.6" r="6.5" fill="url(#pt)"/></g><g filter="url(#sh)"><circle cx="1548.8" cy="801" r="6" fill="#c8cce8" stroke="#202020" stroke-width="1"/><circle cx="1548.8" cy="801" r="6" fill="url(#pt)"/></g><g filter="url(#sh)"><circle cx="1552" cy="801" r="6" fill="#c8cce8" stroke="#202020" stroke-width="1"/><circle cx="1552" cy="801" r="6" fill="url(#pt)"/></g><g filter="url(#sh)"><circle cx="1556" cy="801" r="6" fill="#c8cce8" stroke="#202020" stroke-width="1"/><circle cx="1556" cy="801" r="6" fill="url(#pt)"/></g><g filter="url(#sh)"><circle cx="1560" cy="801" r="6" fill="#c8cce8" stroke="#202020" stroke-width="1"/><circle cx="1560" cy="801" r="6" fill="url(#pt)"/></g><g filter="url(#sh)"><circle cx="1563.5" cy="801" r="6" fill="#c8cce8" stroke="#202020" stroke-width="1"/><circle cx="1563.5" cy="801" r="6" fill="url(#pt)"/></g><g filter="url(#sh)"><circle cx="833.5" cy="877.2" r="5.5" fill="#d0d4ec" stroke="#202020" stroke-width="1"/><circle cx="833.5" cy="877.2" r="5.5" fill="url(#pt)"/></g><g filter="url(#sh)"><circle cx="1025.6" cy="865.6" r="5.5" fill="#d0d4ec" stroke="#202020" stroke-width="1"/><circle cx="1025.6" cy="865.6" r="5.5" fill="url(#pt)"/></g><g filter="url(#sh)"><circle cx="1040" cy="794" r="7.5" fill="#208080" stroke="#202020" stroke-width="1"/><circle cx="1040" cy="794" r="7.5" fill="url(#pt)"/></g><g filter="url(#sh)"><circle cx="1038" cy="796" r="7.5" fill="#006000" stroke="#202020" stroke-width="1"/><circle cx="1038" cy="796" r="7.5" fill="url(#pt)"/></g><g filter="url(#sh)"><circle cx="1044" cy="793" r="7.5" fill="#202060" stroke="#202020" stroke-width="1"/><circle cx="1044" cy="793" r="7.5" fill="url(#pt)"/></g><g filter="url(#sh)"><circle cx="1042.2" cy="792.1" r="7" fill="#e010e0" stroke="#202020" stroke-width="1"/><circle cx="1042.2" cy="792.1" r="7" fill="url(#pt)"/></g><rect x="1041.4" y="791.3000000000001" width="1.6" height="1.8" fill="#000"/><g filter="url(#sh)"><circle cx="1074.8" cy="768.1" r="5.2" fill="#f4f4f4" stroke="#202020" stroke-width="1"/><circle cx="1074.8" cy="768.1" r="5.2" fill="url(#pt)"/></g><g filter="url(#sh)"><circle cx="1097.5" cy="778.1" r="5.2" fill="#f4f4f4" stroke="#202020" stroke-width="1"/><circle cx="1097.5" cy="778.1" r="5.2" fill="url(#pt)"/></g><g filter="url(#sh)"><circle cx="1087.4" cy="792.9" r="5.2" fill="#f4f4f4" stroke="#202020" stroke-width="1"/><circle cx="1087.4" cy="792.9" r="5.2" fill="url(#pt)"/></g><g filter="url(#sh)"><circle cx="1115" cy="775.5" r="5.2" fill="#f4f4f4" stroke="#202020" stroke-width="1"/><circle cx="1115" cy="775.5" r="5.2" fill="url(#pt)"/></g><g filter="url(#sh)"><circle cx="1118.9" cy="774.2" r="5.2" fill="#f4f4f4" stroke="#202020" stroke-width="1"/><circle cx="1118.9" cy="774.2" r="5.2" fill="url(#pt)"/></g><g filter="url(#sh)"><circle cx="1128" cy="769.4" r="5.2" fill="#f4f4f4" stroke="#202020" stroke-width="1"/><circle cx="1128" cy="769.4" r="5.2" fill="url(#pt)"/></g><g filter="url(#sh)"><circle cx="1142.7" cy="763.2" r="5.2" fill="#f4f4f4" stroke="#202020" stroke-width="1"/><circle cx="1142.7" cy="763.2" r="5.2" fill="url(#pt)"/></g><g filter="url(#sh)"><circle cx="1155.7" cy="771" r="5.2" fill="#f4f4f4" stroke="#202020" stroke-width="1"/><circle cx="1155.7" cy="771" r="5.2" fill="url(#pt)"/></g><g filter="url(#sh)"><circle cx="1158.9" cy="763.2" r="5.2" fill="#f4f4f4" stroke="#202020" stroke-width="1"/><circle cx="1158.9" cy="763.2" r="5.2" fill="url(#pt)"/></g><g filter="url(#sh)"><circle cx="1167.7" cy="765.5" r="5.2" fill="#f4f4f4" stroke="#202020" stroke-width="1"/><circle cx="1167.7" cy="765.5" r="5.2" fill="url(#pt)"/></g><g filter="url(#sh)"><circle cx="1140.4" cy="787.3" r="5.2" fill="#f4f4f4" stroke="#202020" stroke-width="1"/><circle cx="1140.4" cy="787.3" r="5.2" fill="url(#pt)"/></g><g filter="url(#sh)"><circle cx="1178.8" cy="772.3" r="5.2" fill="#f4f4f4" stroke="#202020" stroke-width="1"/><circle cx="1178.8" cy="772.3" r="5.2" fill="url(#pt)"/></g><g filter="url(#sh)"><circle cx="1184.6" cy="781.4" r="5.2" fill="#f4f4f4" stroke="#202020" stroke-width="1"/><circle cx="1184.6" cy="781.4" r="5.2" fill="url(#pt)"/></g><g filter="url(#sh)"><circle cx="1194.8" cy="789.5" r="5.2" fill="#f4f4f4" stroke="#202020" stroke-width="1"/><circle cx="1194.8" cy="789.5" r="5.2" fill="url(#pt)"/></g><g filter="url(#sh)"><circle cx="1202.9" cy="776.2" r="5.2" fill="#f4f4f4" stroke="#202020" stroke-width="1"/><circle cx="1202.9" cy="776.2" r="5.2" fill="url(#pt)"/></g><g filter="url(#sh)"><circle cx="1221.7" cy="767.7" r="5.2" fill="#f4f4f4" stroke="#202020" stroke-width="1"/><circle cx="1221.7" cy="767.7" r="5.2" fill="url(#pt)"/></g><g filter="url(#sh)"><circle cx="1227.3" cy="763.2" r="5.2" fill="#f4f4f4" stroke="#202020" stroke-width="1"/><circle cx="1227.3" cy="763.2" r="5.2" fill="url(#pt)"/></g><g filter="url(#sh)"><circle cx="1239.6" cy="785.3" r="5.2" fill="#f4f4f4" stroke="#202020" stroke-width="1"/><circle cx="1239.6" cy="785.3" r="5.2" fill="url(#pt)"/></g><g filter="url(#sh)"><circle cx="1243.2" cy="763.8" r="5.2" fill="#f4f4f4" stroke="#202020" stroke-width="1"/><circle cx="1243.2" cy="763.8" r="5.2" fill="url(#pt)"/></g><g filter="url(#sh)"><circle cx="1250.8" cy="760.6" r="5.2" fill="#f4f4f4" stroke="#202020" stroke-width="1"/><circle cx="1250.8" cy="760.6" r="5.2" fill="url(#pt)"/></g><g filter="url(#sh)"><circle cx="1269.5" cy="777.5" r="5.2" fill="#f4f4f4" stroke="#202020" stroke-width="1"/><circle cx="1269.5" cy="777.5" r="5.2" fill="url(#pt)"/></g><g filter="url(#sh)"><circle cx="1281.6" cy="766.4" r="5.2" fill="#f4f4f4" stroke="#202020" stroke-width="1"/><circle cx="1281.6" cy="766.4" r="5.2" fill="url(#pt)"/></g><g filter="url(#sh)"><circle cx="1289.8" cy="743.4" r="5.2" fill="#f4f4f4" stroke="#202020" stroke-width="1"/><circle cx="1289.8" cy="743.4" r="5.2" fill="url(#pt)"/></g><g filter="url(#sh)"><circle cx="1300.5" cy="764.5" r="5.2" fill="#f4f4f4" stroke="#202020" stroke-width="1"/><circle cx="1300.5" cy="764.5" r="5.2" fill="url(#pt)"/></g><g filter="url(#sh)"><circle cx="1317.7" cy="750.4" r="5.2" fill="#f4f4f4" stroke="#202020" stroke-width="1"/><circle cx="1317.7" cy="750.4" r="5.2" fill="url(#pt)"/></g><text x="1010" y="791" font-family="Liberation Serif" font-size="13" fill="#111" letter-spacing="0">D65</text><text x="969" y="805" font-family="Liberation Serif" font-size="13" fill="#111" letter-spacing="0">9300</text><text x="1050" y="777" font-family="Liberation Serif" font-size="13" fill="#111" letter-spacing="0">5500</text><text x="1129" y="756" font-family="Liberation Serif" font-size="13" fill="#111" letter-spacing="0">4000</text><text x="1225" y="740" font-family="Liberation Serif" font-size="13" fill="#111" letter-spacing="0">3000</text><text x="1287" y="737" font-family="Liberation Serif" font-size="13" fill="#111" letter-spacing="0">2700</text><text x="1263" y="764" font-family="Liberation Serif" font-size="13" fill="#111" letter-spacing="0">A</text><text x="1106" y="796" font-family="Liberation Serif" font-size="13" fill="#111" letter-spacing="0">B</text><text x="1041" y="813" font-family="Liberation Serif" font-size="13" fill="#111" letter-spacing="0">C</text><line x1="680" y1="503.3" x2="711" y2="482.2" stroke="#d8d8d8" stroke-width="1"/><text transform="translate(712,487) scale(1.8,1)" x="0" y="0" font-family="Liberation Serif" font-size="11.8" fill="#f4f4f4">520 nm</text><line x1="927.4" y1="555" x2="960" y2="532" stroke="#d8d8d8" stroke-width="1"/><text transform="translate(960,538.2) scale(1.8,1)" x="0" y="0" font-family="Liberation Serif" font-size="11.8" fill="#f4f4f4">540 nm</text><line x1="1156.3" y1="629.5" x2="1187.4" y2="606" stroke="#d8d8d8" stroke-width="1"/><text transform="translate(1187.4,610.5) scale(1.8,1)" x="0" y="0" font-family="Liberation Serif" font-size="11.8" fill="#f4f4f4">560 nm</text><line x1="1315.5" y1="682.8" x2="1348" y2="659" stroke="#d8d8d8" stroke-width="1"/><text transform="translate(1348,665) scale(1.8,1)" x="0" y="0" font-family="Liberation Serif" font-size="11.8" fill="#f4f4f4">580 nm</text><line x1="1426.6" y1="720.7" x2="1457.7" y2="696.9" stroke="#d8d8d8" stroke-width="1"/><text transform="translate(1457.7,702.8) scale(1.8,1)" x="0" y="0" font-family="Liberation Serif" font-size="11.8" fill="#f4f4f4">600 nm</text><line x1="1529.5" y1="756" x2="1562" y2="733.4" stroke="#d8d8d8" stroke-width="1"/><text transform="translate(1562,738) scale(1.8,1)" x="0" y="0" font-family="Liberation Serif" font-size="11.8" fill="#f4f4f4">620 nm</text><line x1="1648.7" y1="790.3" x2="1674.4" y2="771.4" stroke="#d8d8d8" stroke-width="1"/><text transform="translate(1674.4,776.2) scale(1.8,1)" x="0" y="0" font-family="Liberation Serif" font-size="11.8" fill="#f4f4f4">640 nm</text><line x1="1690.7" y1="810.6" x2="1724.5" y2="788.4" stroke="#d8d8d8" stroke-width="1"/><text transform="translate(1724.5,793) scale(1.8,1)" x="0" y="0" font-family="Liberation Serif" font-size="11.8" fill="#f4f4f4">660 nm</text><line x1="1712.3" y1="817.4" x2="1744.8" y2="795" stroke="#d8d8d8" stroke-width="1"/><text transform="translate(1744.8,799.8) scale(1.8,1)" x="0" y="0" font-family="Liberation Serif" font-size="11.8" fill="#f4f4f4">680 nm</text><line x1="532" y1="644.4" x2="502" y2="650" stroke="#d8d8d8" stroke-width="1"/><text transform="translate(447,660) scale(1.8,1)" x="0" y="0" font-family="Liberation Serif" font-size="11.8" fill="#f4f4f4">500 nm</text><line x1="657" y1="878.1" x2="627.1" y2="883.5" stroke="#d8d8d8" stroke-width="1"/><text transform="translate(572.4,893) scale(1.8,1)" x="0" y="0" font-family="Liberation Serif" font-size="11.8" fill="#f4f4f4">480 nm</text><line x1="730.4" y1="941.2" x2="700.6" y2="946.4" stroke="#d8d8d8" stroke-width="1"/><text transform="translate(645.7,955.2) scale(1.8,1)" x="0" y="0" font-family="Liberation Serif" font-size="11.8" fill="#f4f4f4">460 nm</text><line x1="754" y1="956.1" x2="724.3" y2="961.2" stroke="#d8d8d8" stroke-width="1"/><text transform="translate(669.4,970) scale(1.8,1)" x="0" y="0" font-family="Liberation Serif" font-size="11.8" fill="#f4f4f4">440 nm</text><line x1="769.6" y1="963.3" x2="739.8" y2="968.7" stroke="#d8d8d8" stroke-width="1"/><text transform="translate(685,978.2) scale(1.8,1)" x="0" y="0" font-family="Liberation Serif" font-size="11.8" fill="#f4f4f4">420 nm</text><text x="404" y="523.4199999999998" font-family="Liberation Serif" font-size="13" fill="#fff" letter-spacing="0">0.8</text><text x="404" y="579.53" font-family="Liberation Serif" font-size="13" fill="#fff" letter-spacing="0">0.7</text><text x="404" y="635.6399999999999" font-family="Liberation Serif" font-size="13" fill="#fff" letter-spacing="0">0.6</text><text x="404" y="691.75" font-family="Liberation Serif" font-size="13" fill="#fff" letter-spacing="0">0.5</text><text x="404" y="747.8599999999999" font-family="Liberation Serif" font-size="13" fill="#fff" letter-spacing="0">0.4</text><text x="404" y="803.9699999999999" font-family="Liberation Serif" font-size="13" fill="#fff" letter-spacing="0">0.3</text><text x="404" y="860.0799999999999" font-family="Liberation Serif" font-size="13" fill="#fff" letter-spacing="0">0.2</text><text x="404" y="916.1899999999999" font-family="Liberation Serif" font-size="13" fill="#fff" letter-spacing="0">0.1</text><text x="692.8" y="1001" font-family="Liberation Serif" font-size="13" fill="#fff" letter-spacing="0">0.1</text><text x="858.1" y="1001" font-family="Liberation Serif" font-size="13" fill="#fff" letter-spacing="0">0.2</text><text x="1023.4" y="1001" font-family="Liberation Serif" font-size="13" fill="#fff" letter-spacing="0">0.3</text><text x="1188.7" y="1001" font-family="Liberation Serif" font-size="13" fill="#fff" letter-spacing="0">0.4</text><text x="1354.0" y="1001" font-family="Liberation Serif" font-size="13" fill="#fff" letter-spacing="0">0.5</text><text x="1519.3" y="1001" font-family="Liberation Serif" font-size="13" fill="#fff" letter-spacing="0">0.6</text><text x="1684.6" y="1001" font-family="Liberation Serif" font-size="13" fill="#fff" letter-spacing="0">0.7</text><text x="1880" y="944" font-family="Liberation Sans" font-weight="bold" font-size="16" fill="#444" text-anchor="end">hcfr.sourceforge.net</text></svg>
<div class="a" style="left:0;top:1016px;width:1900px;height:3px;background:#8a8a8a"></div>
<div class="a" style="left:19px;top:1029px;width:1824px;height:2px;background:#a0a0a0"></div>
<div class="a" style="left:0;top:1041px;width:1920px;height:2px;background:#000"></div>
<div class="a" style="left:0;top:1043px;width:1920px;height:18px;background:#f0f0f0"></div>
<div class="a" style="left:1px;top:1043px;width:52px;height:18px;background:#f0f0f0;border:1px solid #000;border-top:none"></div>
<div class="a" style="left:18px;top:1043px;width:1px;height:17px;background:#666"></div><div class="a" style="left:35px;top:1043px;width:1px;height:17px;background:#666"></div>
<svg class="a" style="left:4px;top:1046px" width="46" height="12"><path d="M1.5 1.5 l8 8 M9.5 1.5 l-8 8" stroke="#000" stroke-width="1.3"/><path d="M28 2 l-4 4 4 4z M42 2 l4 4 -4 4z" fill="#000"/></svg>
<svg class="a" style="left:0;top:1040px" width="400" height="22"><path d="M255 2 L262 20.5 H368 L375 2" fill="#f0f0f0" stroke="#222" stroke-width="1"/><path d="M190 2 L197 20.5 H255 L262 2" fill="#f0f0f0" stroke="#222" stroke-width="1"/><path d="M120 2 L127 20.5 H190 L197 2" fill="#f0f0f0" stroke="#222" stroke-width="1"/><path d="M55 2 L62 20.5 H120 L127 2" fill="#fff" stroke="#222" stroke-width="1"/><path d="M53 2 H400" stroke="#000" stroke-width="2"/></svg>
<div class="t" style="left:66px;top:1046px;font-size:10.6px;font-weight:bold">Measures</div>
<div class="t" style="left:135px;top:1046px;font-size:9.3px;color:#222">RGB Levels</div>
<div class="t" style="left:208px;top:1046px;font-size:9.3px;color:#222">Luminance</div>
<div class="t" style="left:280px;top:1046px;font-size:9.3px;color:#222">Color temperature</div>
<svg class="a" style="left:1750px;top:1044px" width="16" height="15"><path d="M1 1 h13 v9 l-3 4 h-3 l-1 -2 -1 2 h-3 l-2 -4z" fill="#807020" stroke="#302000"/><rect x="4" y="3" width="8" height="5" fill="#e02020"/><path d="M9 10 l3 0 -1.5 3z" fill="#f0e000"/></svg>
<div class="a" style="left:1847px;top:1044px;width:12px;height:12px;background:#fff;border:1px solid #555;border-right-color:#ccc;border-bottom-color:#ccc"></div>
<div class="t" style="left:1865px;top:1045px;font-size:11.5px">Reference</div>
<div class="a" style="left:0;top:1061px;width:1920px;height:19px;background:#e8eef7"></div>
<div class="t" style="left:3px;top:1064px;font-size:11.5px">Ready</div>
<div class="a" style="left:1743px;top:1062px;width:74px;height:18px;border-top:1px solid #a0a0a0;border-left:1px solid #a0a0a0"></div>
<div class="a" style="left:1820px;top:1062px;width:28px;height:18px;border-top:1px solid #a0a0a0;border-left:1px solid #a0a0a0"></div>
<div class="a" style="left:1851px;top:1062px;width:33px;height:18px;border-top:1px solid #a0a0a0;border-left:1px solid #a0a0a0"></div>
<div class="a" style="left:1887px;top:1062px;width:33px;height:18px;border-top:1px solid #a0a0a0;border-left:1px solid #a0a0a0"></div>
<div class="t" style="left:1853px;top:1063px;font-size:13px">NUM</div>
</body></html>
